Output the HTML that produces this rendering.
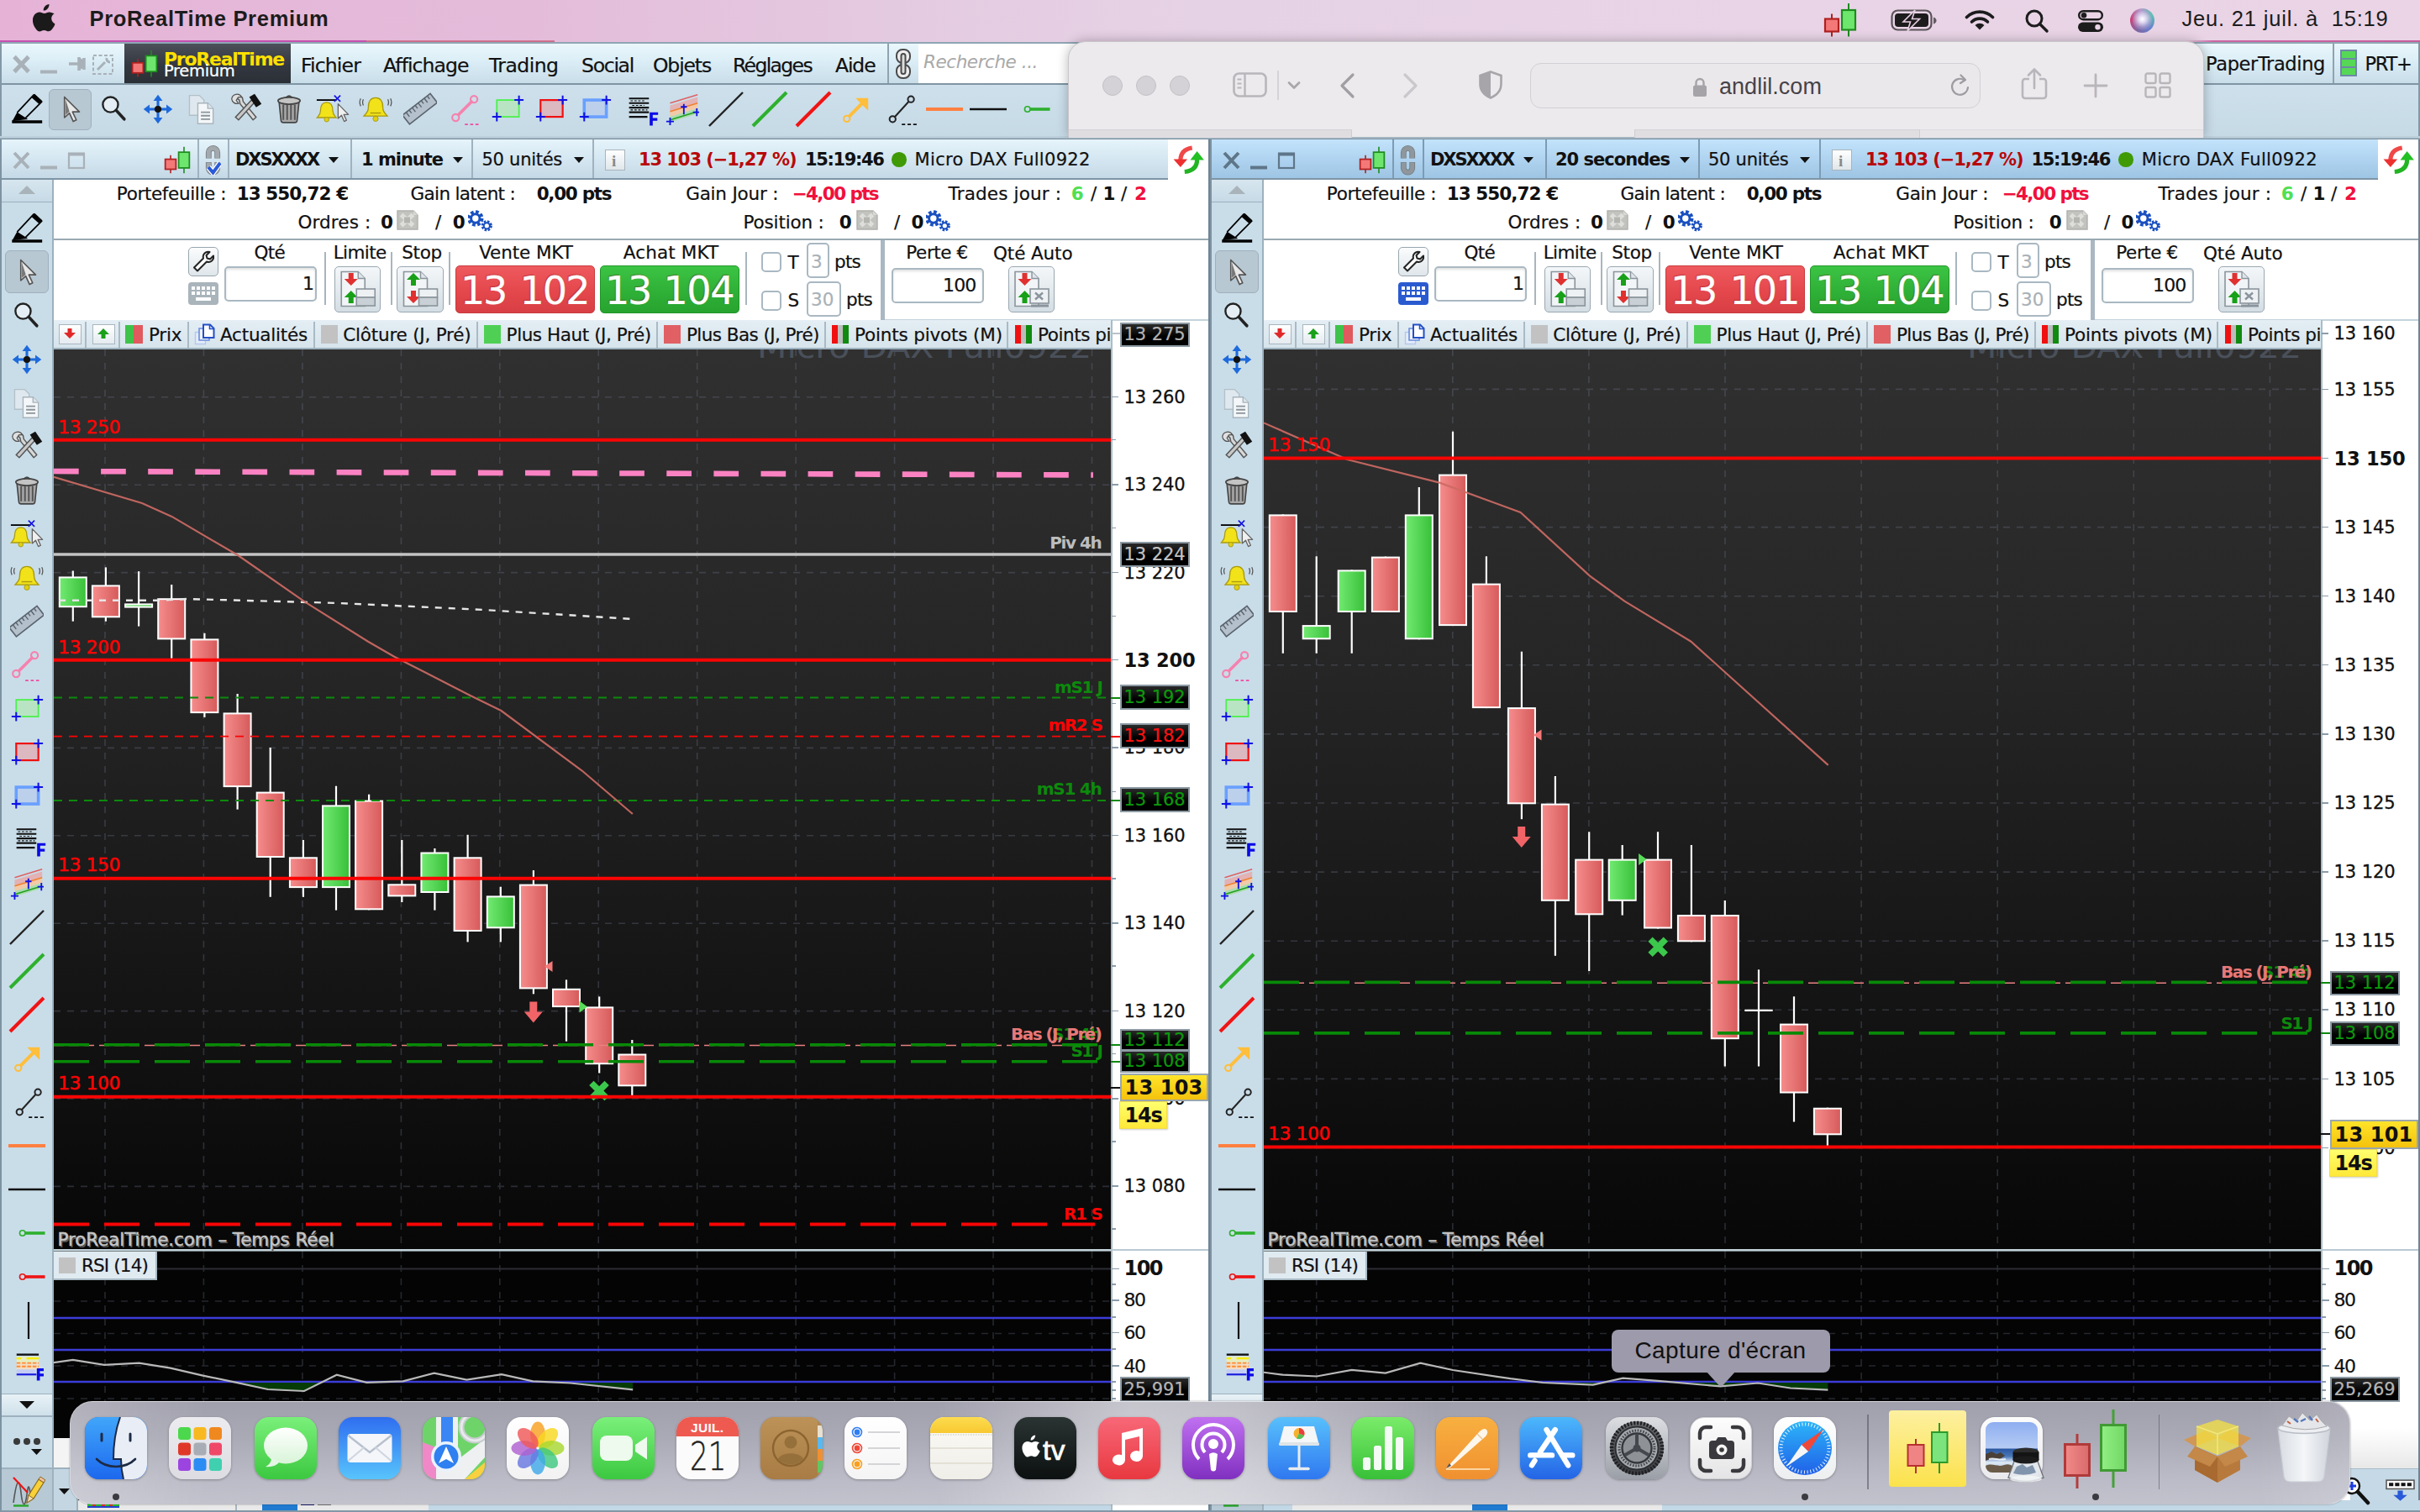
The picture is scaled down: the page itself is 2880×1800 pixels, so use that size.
<!DOCTYPE html>
<html lang="fr"><head><meta charset="utf-8"><title>ProRealTime Premium</title>
<style>
html,body{margin:0;padding:0;background:#fff;}
body{width:2880px;height:1800px;position:relative;overflow:hidden;font-family:"DejaVu Sans","Liberation Sans",sans-serif;}
div,span.t,svg{position:absolute;box-sizing:border-box;}
span.t{white-space:pre;line-height:1;}

</style></head><body>
<svg width="0" height="0" style="left:0;top:0"><defs><symbol id="i-pencil" viewBox="0 0 44 44"><path d="M2.500 38.600H42" stroke="#000" stroke-width="3.800"/><path d="M3 37.500L9.200 26l14.200 9.200z" fill="#000"/><path d="M9.200 26.500L31 3.100l10.500 9.200L20.100 33.700" fill="none" stroke="#000" stroke-width="1.900" stroke-linejoin="round"/><path d="M27.700 6.200l4.400-4.400 10 9.400-3.900 4.400z" fill="#000"/></symbol><symbol id="i-arrow" viewBox="0 0 44 44"><path d="M14 6v27l6.500-6 5 11 4-2-5-10.500h9z" fill="#e8e8e8" stroke="#555" stroke-width="1.800" stroke-linejoin="round"/><path d="M15.500 9.500v20l5-4.500z" fill="#777"/></symbol><symbol id="i-mag" viewBox="0 0 44 44"><circle cx="17" cy="16" r="10" fill="#e4eef4" stroke="#222" stroke-width="2.600"/><path d="M24.500 23.500L35 35" stroke="#222" stroke-width="4" stroke-linecap="round"/></symbol><symbol id="i-move" viewBox="0 0 44 44"><g fill="#1e6adc"><path d="M22 3l6 8h-12z"/><path d="M22 41l6-8h-12z"/><path d="M3 22l8-6v12z"/><path d="M41 22l-8-6v12z"/><rect x="20.300" y="9" width="3.400" height="26"/><rect x="9" y="20.300" width="26" height="3.400"/></g><circle cx="22" cy="22" r="4.500" fill="#111"/></symbol><symbol id="i-copy" viewBox="0 0 44 44"><path d="M6 4h13l6 6v20H6z" fill="#dfe8ee" stroke="#b4c0c8" stroke-width="1.500"/><path d="M17 14h13l7 7v20H17z" fill="#f4f7f9" stroke="#a8b4bc" stroke-width="1.500"/><path d="M30 14v7h7" fill="#dde5ea" stroke="#a8b4bc" stroke-width="1.500"/><path d="M21 26h12M21 30.500h12M21 35h12" stroke="#8a949c" stroke-width="2"/></symbol><symbol id="i-tools" viewBox="0 0 44 44"><path d="M8 6l5 4 1 5 17 21 4-3.500L18 12l-1-5-5-4z" fill="#d8d8d8" stroke="#555" stroke-width="1.600" stroke-linejoin="round"/><path d="M33 13L12 36l-4-3.500L29 10z" fill="#c8c8c8" stroke="#555" stroke-width="1.600"/><path d="M26 6l7-4 9 13-7 4.500z" fill="#111"/><path d="M3 8.500a7 7 0 0 0 9 6l-3-4 2.500-4 4.500-.5A7 7 0 0 0 3 8.500z" fill="#e0e0e0" stroke="#555" stroke-width="1.400"/></symbol><symbol id="i-trash" viewBox="0 0 44 44"><path d="M9 13h26l-2.500 24a3 3 0 0 1-3 2.500h-15a3 3 0 0 1-3-2.500z" fill="#a8a8a8" stroke="#444" stroke-width="1.800"/><path d="M14.500 16v20M19.500 16v20M24.500 16v20M29.500 16v20" stroke="#555" stroke-width="2.200"/><ellipse cx="22" cy="11" rx="14.500" ry="4.500" fill="#c4c4c4" stroke="#444" stroke-width="1.800"/><path d="M18 7q4-5 8 0" fill="none" stroke="#444" stroke-width="2"/></symbol><symbol id="i-bellc" viewBox="0 0 44 44"><path d="M1 10h26" stroke="#000" stroke-width="2"/><path d="M14 13c-6 0-8 5-8 11 0 5-3 7-4.500 9h25c-1.500-2-4.500-4-4.500-9 0-6-2-11-8-11z" fill="#f2e21a" stroke="#a89a10" stroke-width="1.400"/><circle cx="14" cy="35.500" r="3" fill="#e0d010" stroke="#a89a10"/><path d="M24 4l8 8M32 4l-8 8" stroke="#1414e0" stroke-width="1.800"/><path d="M29 15v19l4.500-4 3.500 8 3-1.500-3.500-7.500h6z" fill="#f0f0f0" stroke="#666" stroke-width="1.500" stroke-linejoin="round"/></symbol><symbol id="i-bell" viewBox="0 0 44 44"><path d="M22 7c-7 0-9.500 6-9.500 13 0 6-4 8.500-6 11h31c-2-2.500-6-5-6-11 0-7-2.500-13-9.500-13z" fill="#f2e21a" stroke="#a89a10" stroke-width="1.500"/><path d="M15 27h14" stroke="#a89a10" stroke-width="1.500"/><circle cx="22" cy="34.500" r="3.400" fill="#e0d010" stroke="#a89a10"/><path d="M6 9q-2 4 0 8M2.500 8q-2.500 5 0 10M38 9q2 4 0 8M41.500 8q2.500 5 0 10" fill="none" stroke="#555" stroke-width="1.400"/></symbol><symbol id="i-ruler" viewBox="0 0 44 44"><g transform="rotate(-38 22 22)"><rect x="-1" y="14" width="46" height="15" fill="#b4c0cc" stroke="#5a646e" stroke-width="1.800"/><path d="M5 14v7M10 14v5M15 14v7M20 14v5M25 14v7M30 14v5M35 14v7M40 14v5" stroke="#5a646e" stroke-width="1.500"/></g></symbol><symbol id="i-pink" viewBox="0 0 44 44"><path d="M11 30L30 11" stroke="#f582ae" stroke-width="4"/><circle cx="8" cy="33" r="4.500" fill="none" stroke="#f582ae" stroke-width="2.400"/><circle cx="32" cy="9" r="4.500" fill="none" stroke="#f582ae" stroke-width="2.400"/><path d="M20 42h18" stroke="#f04aa0" stroke-width="1.800" stroke-dasharray="4 3"/></symbol><symbol id="i-rectg" viewBox="0 0 44 44"><rect x="8" y="10" width="29" height="22" fill="#b8e4c4" stroke="#4ef04e" stroke-width="2"/><g stroke="#1010e6" stroke-width="2.200"><path d="M2 32h12M8 26v12M31 10h12M37 4v12"/></g></symbol><symbol id="i-rectr" viewBox="0 0 44 44"><rect x="8" y="10" width="29" height="22" fill="#dcb8c0" stroke="#f01010" stroke-width="2.400"/><g stroke="#1010e6" stroke-width="2.200"><path d="M2 32h12M8 26v12M31 10h12M37 4v12"/></g></symbol><symbol id="i-rectb" viewBox="0 0 44 44"><rect x="8" y="10" width="29" height="22" fill="#bcd0ec" stroke="#6aa0ff" stroke-width="4"/><g stroke="#1010e6" stroke-width="2.200"><path d="M2 32h12M8 26v12M31 10h12M37 4v12"/></g></symbol><symbol id="i-textf" viewBox="0 0 44 44"><path d="M4 8h26M4 14h26M4 20h26M4 26h26M4 32h24" stroke="#111" stroke-width="2.400"/><path d="M6 11h20M8 17h16M6 23h22" stroke="#111" stroke-width="1.200" stroke-dasharray="3 2"/><path d="M31 26h11v3.500h-7v4h6v3.500h-6v6.500h-4z" fill="#0a0ae6"/></symbol><symbol id="i-chan" viewBox="0 0 44 44"><path d="M6 17L42 6v8L6 25z" fill="#e8a8a8" opacity=".8"/><path d="M6 25l36-11v7L6 32z" fill="#f6c8a0" opacity=".9"/><path d="M6 32l36-11v7L6 39z" fill="#a8dca8" opacity=".9"/><path d="M6 25l36-11" stroke="#f08030" stroke-width="1.800"/><path d="M6 36l36-11" stroke="#20a020" stroke-width="1.800"/><path d="M6 14L42 3" stroke="#e06060" stroke-width="1.500"/><g stroke="#1010e6" stroke-width="2"><path d="M1 38h10M6 33v10M36 26h10M41 21v10M20 19h8M24 15v14"/></g></symbol><symbol id="i-lineb" viewBox="0 0 44 44"><path d="M2 42L42 2" stroke="#222" stroke-width="2.400"/></symbol><symbol id="i-lineg" viewBox="0 0 44 44"><path d="M2 42L42 2" stroke="#2eb02e" stroke-width="4"/></symbol><symbol id="i-liner" viewBox="0 0 44 44"><path d="M2 42L42 2" stroke="#f01414" stroke-width="4"/></symbol><symbol id="i-oarrow" viewBox="0 0 44 44"><path d="M11 32L30 13" stroke="#ffbe3c" stroke-width="4.500"/><path d="M20 7.500h16.500V24z" fill="#ffbe3c"/><circle cx="8.500" cy="34.500" r="4" fill="none" stroke="#ffbe3c" stroke-width="2.400"/></symbol><symbol id="i-node" viewBox="0 0 44 44"><path d="M10 33L30 11" stroke="#222" stroke-width="2.200"/><circle cx="8" cy="35" r="4" fill="#c8dce8" stroke="#222" stroke-width="2.200"/><circle cx="32" cy="9" r="4" fill="#c8dce8" stroke="#222" stroke-width="2.200"/><path d="M20 42h20" stroke="#111" stroke-width="2" stroke-dasharray="4.500 3"/></symbol><symbol id="i-hlo" viewBox="0 0 44 44"><path d="M0 22h44" stroke="#ff8040" stroke-width="4"/></symbol><symbol id="i-hlb" viewBox="0 0 44 44"><path d="M0 22h44" stroke="#111" stroke-width="2.400"/></symbol><symbol id="i-rayg" viewBox="0 0 44 44"><path d="M12 22h26" stroke="#2eb02e" stroke-width="4"/><circle cx="8.500" cy="22" r="3.600" fill="none" stroke="#2eb02e" stroke-width="1.800"/></symbol><symbol id="i-rayr" viewBox="0 0 44 44"><path d="M12 22h26" stroke="#f01414" stroke-width="4"/><circle cx="8.500" cy="22" r="3.600" fill="none" stroke="#f01414" stroke-width="1.800"/></symbol><symbol id="i-vline" viewBox="0 0 44 44"><path d="M24 0v44" stroke="#111" stroke-width="2.200"/></symbol><symbol id="i-fib" viewBox="0 0 44 44"><path d="M8.500 9.500h29" stroke="#111" stroke-width="2.600"/><rect x="8.500" y="12" width="29" height="8" fill="#e8ecc0"/><path d="M8.500 14.500h29" stroke="#f4ec00" stroke-width="2.400" stroke-dasharray="6 7 16 0"/><rect x="8.500" y="20" width="29" height="9" fill="#f4dcc0"/><path d="M8.500 20.500h29M8.500 25h29" stroke="#ff8a30" stroke-width="2" stroke-dasharray="5 2"/><rect x="8.500" y="29" width="24" height="5" fill="#c4ccf4"/><path d="M8.500 35.500h26" stroke="#1a1ae0" stroke-width="2.400"/><path d="M35 27.500h11.500V31h-7.500v3.500h6.500V38h-6.500v5.500h-4z" fill="#0a0ae6"/></symbol></defs></svg>
<div style="left:0px;top:0px;width:2880px;height:1800px;background:#c9dde9;"></div>
<div style="left:0px;top:0px;width:2880px;height:50px;background:linear-gradient(90deg,#e6b3d7 0%,#e4bcda 22%,#e4cbe1 38%,#e6d2e5 50%,#e8d4e6 75%,#ead4e6 100%);"></div>
<div style="left:0px;top:48px;width:436px;height:2px;background:#c650b0;"></div>
<div style="left:436px;top:48px;width:224px;height:2px;background:linear-gradient(#d47c98,#cc6684);"></div>
<div style="left:2600px;top:48px;width:280px;height:2px;background:linear-gradient(90deg,rgba(204,98,160,0),#cc66a4 12%,#c85c9c);"></div>
<svg style="left:39px;top:5px" width="28" height="33" viewBox="0 0 28 33"><path d="M19.500 0c.2 2-.6 3.900-1.800 5.300-1.200 1.400-3.100 2.500-5 2.300-.3-1.900.7-3.900 1.800-5.100C15.700 1.100 17.800.1 19.500 0zM25.600 11.300c-2.100 1.300-3.400 3.300-3.400 5.800 0 2.900 1.800 5.300 4.300 6.300-.5 1.600-1.300 3.200-2.300 4.700-1.400 2.100-2.900 4.200-5.200 4.200-2.300 0-2.900-1.400-5.500-1.400-2.600 0-3.400 1.400-5.500 1.500-2.200.1-3.900-2.300-5.300-4.400C-.2 23.700-1.300 16.900 1.700 12.900c1.500-2.100 3.900-3.400 6.300-3.400 2.400 0 3.900 1.500 5.900 1.500 1.900 0 3.100-1.500 5.900-1.500 2.100 0 4.400 1.100 5.800 1.800z" fill="#1a1a1a"/></svg>
<span class="t" style="left:106.5px;top:10.4px;font-size:25.5px;color:#1c1c1c;font-family:'Liberation Sans','DejaVu Sans',sans-serif;font-weight:700;letter-spacing:0.70px;">ProRealTime Premium</span>
<svg style="left:2170px;top:3px" width="40" height="42" viewBox="0 0 40 42"><path d="M10 13.500V40.500" stroke="#b02020" stroke-width="2"/><rect x="2" y="19.500" width="16" height="15" fill="#f47878" stroke="#b02020" stroke-width="2.200"/><path d="M30 1V40.500" stroke="#1e8c1e" stroke-width="2"/><rect x="22" y="9" width="16" height="23.500" fill="#6ee66e" stroke="#1e8c1e" stroke-width="2.200"/></svg>
<svg style="left:2250px;top:11px" width="56" height="27" viewBox="0 0 56 27"><rect x="1.500" y="1.500" width="47" height="23" rx="7" fill="none" stroke="#2a2a2a" stroke-width="2.200" opacity=".75"/><rect x="5" y="5" width="40" height="16" rx="4" fill="#1c1c1c"/><path d="M51 9.500v8c2-.5 3.500-2 3.500-4s-1.500-3.500-3.500-4z" fill="#2a2a2a" opacity=".7"/><path d="M29 1L15 15h8.500l-3.500 11 14.500-14.500h-9z" fill="#1c1c1c" stroke="#e8d0e4" stroke-width="1.600"/></svg>
<svg style="left:2338px;top:11px" width="36" height="26" viewBox="0 0 36 26"><g fill="none" stroke="#1c1c1c" stroke-width="3.600" stroke-linecap="round"><path d="M2.500 9.500a22 22 0 0 1 31 0"/><path d="M8.500 15a13.500 13.500 0 0 1 19 0"/></g><path d="M18 24.500l-5.500-5.500a7.800 7.800 0 0 1 11 0z" fill="#1c1c1c"/></svg>
<svg style="left:2409px;top:10px" width="30" height="30" viewBox="0 0 30 30"><circle cx="12" cy="12" r="9" fill="none" stroke="#1c1c1c" stroke-width="3"/><path d="M18.500 18.500L27 27" stroke="#1c1c1c" stroke-width="3.400" stroke-linecap="round"/></svg>
<svg style="left:2473px;top:12px" width="30" height="26" viewBox="0 0 30 26"><rect x="1.200" y="1.200" width="27.600" height="10" rx="5" fill="none" stroke="#1c1c1c" stroke-width="2.400"/><circle cx="7" cy="6.200" r="3.300" fill="#1c1c1c"/><rect x="0" y="14.500" width="30" height="11.500" rx="5.750" fill="#1c1c1c"/><circle cx="23.500" cy="20.200" r="3.200" fill="#ead3e5"/></svg>
<div style="left:2535px;top:10px;width:29px;height:29px;border-radius:50%;background:conic-gradient(from 200deg,#7a6aa8,#c8447a 22%,#b49ccc 42%,#5cc0b4 62%,#6a80cc 82%,#7a6aa8);"></div>
<div style="left:2538px;top:13px;width:23px;height:23px;border-radius:50%;background:radial-gradient(circle at 50% 42%,#fff 0%,#e4dcf4 22%,rgba(190,170,215,.55) 55%,rgba(150,130,180,0) 78%);"></div>
<span class="t" style="left:2596.5px;top:10.4px;font-size:25.5px;color:#1c1c1c;font-family:'Liberation Sans','DejaVu Sans',sans-serif;letter-spacing:0.81px;">Jeu. 21 juil. à  15:19</span>
<div style="left:0px;top:50px;width:2880px;height:114px;background:#c8dce8;"></div>
<div style="left:0px;top:50px;width:2880px;height:2px;background:#8fa6b4;"></div>
<div style="left:2px;top:52px;width:2876px;height:47px;background:linear-gradient(#eaf7fc,#d9ecf5 50%,#c9dde9);"></div>
<div style="left:0px;top:99px;width:2880px;height:2px;background:#7f95a3;"></div>
<div style="left:0px;top:50px;width:2px;height:114px;background:#8398a6;"></div>
<div style="left:2878px;top:50px;width:2px;height:114px;background:#8398a6;"></div>
<div style="left:2px;top:101px;width:2876px;height:61px;background:linear-gradient(#cde0ec,#c6dae6);"></div>
<div style="left:0px;top:162px;width:2880px;height:2px;background:#bccfdb;"></div>
<svg style="left:14px;top:64px" width="124" height="26" viewBox="0 0 124 26"><g stroke="#a9b1b8" fill="none"><path d="M3 3.500l17 18M20 3.500l-17 18" stroke-width="5"/><path d="M34 21.500h20" stroke-width="4"/><path d="M68 12h18M80 4v16M86 5v14" stroke-width="3.500"/><path d="M80 5l6 3v8l-6 3z" fill="#a9b1b8"/><rect x="97" y="2" width="23" height="22" stroke-width="2" stroke-dasharray="4 2.500"/><path d="M102 19l9-9m2-5a4 4 0 0 0 4 5" stroke-width="3"/></g></svg>
<div style="left:148px;top:52px;width:198px;height:47px;background:linear-gradient(#4b5059,#33373f 55%,#2b2f36);"></div>
<svg style="left:156px;top:58px" width="32" height="36" viewBox="0 0 40 42"><path d="M10 13.500V40.500" stroke="#b02020" stroke-width="2"/><rect x="2" y="19.500" width="16" height="15" fill="#f47878" stroke="#b02020" stroke-width="2.200"/><path d="M30 1V40.500" stroke="#1e8c1e" stroke-width="2"/><rect x="22" y="9" width="16" height="23.500" fill="#6ee66e" stroke="#1e8c1e" stroke-width="2.200"/></svg>
<span class="t" style="left:195.0px;top:59.9px;font-size:22px;color:#ffe000;font-family:'DejaVu Sans','Liberation Sans',sans-serif;font-weight:700;letter-spacing:-1.25px;">ProRealTime</span>
<span class="t" style="left:195.0px;top:75.2px;font-size:19.5px;color:#ffffff;font-family:'DejaVu Sans','Liberation Sans',sans-serif;letter-spacing:-0.33px;-webkit-text-stroke-width:.22px;">Premium</span>
<span class="t" style="left:358.0px;top:67.4px;font-size:23.5px;color:#111;font-family:'DejaVu Sans','Liberation Sans',sans-serif;letter-spacing:-0.83px;-webkit-text-stroke-width:.22px;">Fichier</span>
<span class="t" style="left:456.0px;top:67.4px;font-size:23.5px;color:#111;font-family:'DejaVu Sans','Liberation Sans',sans-serif;letter-spacing:-0.93px;-webkit-text-stroke-width:.22px;">Affichage</span>
<span class="t" style="left:582.0px;top:67.4px;font-size:23.5px;color:#111;font-family:'DejaVu Sans','Liberation Sans',sans-serif;letter-spacing:-0.53px;-webkit-text-stroke-width:.22px;">Trading</span>
<span class="t" style="left:692.0px;top:67.4px;font-size:23.5px;color:#111;font-family:'DejaVu Sans','Liberation Sans',sans-serif;letter-spacing:-1.28px;-webkit-text-stroke-width:.22px;">Social</span>
<span class="t" style="left:777.0px;top:67.4px;font-size:23.5px;color:#111;font-family:'DejaVu Sans','Liberation Sans',sans-serif;letter-spacing:-1.14px;-webkit-text-stroke-width:.22px;">Objets</span>
<span class="t" style="left:872.0px;top:67.4px;font-size:23.5px;color:#111;font-family:'DejaVu Sans','Liberation Sans',sans-serif;letter-spacing:-1.65px;-webkit-text-stroke-width:.22px;">Réglages</span>
<span class="t" style="left:994.0px;top:67.4px;font-size:23.5px;color:#111;font-family:'DejaVu Sans','Liberation Sans',sans-serif;letter-spacing:-1.12px;-webkit-text-stroke-width:.22px;">Aide</span>
<div style="left:1056px;top:52px;width:2px;height:47px;background:#8fa3b0;"></div>
<svg style="left:1064px;top:57px" width="22" height="38" viewBox="0 0 22 38"><g fill="none" stroke="#4a4a4a" stroke-width="2"><rect x="3" y="2" width="16" height="16" rx="7" fill="#eee"/><rect x="3" y="20" width="16" height="16" rx="7" fill="#eee"/><rect x="8.500" y="7" width="5" height="24" rx="2.500" fill="#ddd"/></g></svg>
<div style="left:1093px;top:52px;width:400px;height:47px;background:#fff;"></div>
<span class="t" style="left:1099.0px;top:63.3px;font-size:21.5px;color:#a9a9a9;font-family:'DejaVu Sans','Liberation Sans',sans-serif;font-style:italic;letter-spacing:-0.44px;">Recherche ...</span>
<span class="t" style="left:2625.0px;top:64.5px;font-size:22.5px;color:#111;font-family:'DejaVu Sans','Liberation Sans',sans-serif;letter-spacing:-0.36px;-webkit-text-stroke-width:.22px;">PaperTrading</span>
<div style="left:2776px;top:52px;width:2px;height:47px;background:#8fa3b0;"></div>
<div style="left:2785px;top:59px;width:20px;height:32px;background:#56d856;border:2px solid #6f88a8;"></div>
<div style="left:2785px;top:69px;width:20px;height:2px;background:#6f88a8;"></div>
<div style="left:2785px;top:79px;width:20px;height:2px;background:#6f88a8;"></div>
<span class="t" style="left:2814.5px;top:64.5px;font-size:22.5px;color:#111;font-family:'DejaVu Sans','Liberation Sans',sans-serif;letter-spacing:-1.29px;-webkit-text-stroke-width:.22px;">PRT+</span>
<div style="left:58px;top:106px;width:51px;height:49px;background:#b7c8d3;border:1.500px solid #9fb0bc;border-radius:6px;"></div>
<svg style="left:12px;top:110px;overflow:visible" width="40" height="40"><use href="#i-pencil"/></svg>
<svg style="left:64px;top:110px;overflow:visible" width="40" height="40"><use href="#i-arrow"/></svg>
<svg style="left:115.8px;top:110px;overflow:visible" width="40" height="40"><use href="#i-mag"/></svg>
<svg style="left:167.8px;top:110px;overflow:visible" width="40" height="40"><use href="#i-move"/></svg>
<svg style="left:220px;top:110px;overflow:visible" width="40" height="40"><use href="#i-copy"/></svg>
<svg style="left:272.8px;top:110px;overflow:visible" width="40" height="40"><use href="#i-tools"/></svg>
<svg style="left:324px;top:110px;overflow:visible" width="40" height="40"><use href="#i-trash"/></svg>
<svg style="left:375.5px;top:110px;overflow:visible" width="40" height="40"><use href="#i-bellc"/></svg>
<svg style="left:427px;top:110px;overflow:visible" width="40" height="40"><use href="#i-bell"/></svg>
<svg style="left:480px;top:110px;overflow:visible" width="40" height="40"><use href="#i-ruler"/></svg>
<svg style="left:535px;top:110px;overflow:visible" width="40" height="40"><use href="#i-pink"/></svg>
<svg style="left:584px;top:110px;overflow:visible" width="40" height="40"><use href="#i-rectg"/></svg>
<svg style="left:636px;top:110px;overflow:visible" width="40" height="40"><use href="#i-rectr"/></svg>
<svg style="left:688px;top:110px;overflow:visible" width="40" height="40"><use href="#i-rectb"/></svg>
<svg style="left:745px;top:110px;overflow:visible" width="40" height="40"><use href="#i-textf"/></svg>
<svg style="left:792px;top:110px;overflow:visible" width="40" height="40"><use href="#i-chan"/></svg>
<svg style="left:842px;top:108px;overflow:visible" width="44" height="44"><use href="#i-lineb"/></svg>
<svg style="left:894px;top:108px;overflow:visible" width="44" height="44"><use href="#i-lineg"/></svg>
<svg style="left:946px;top:108px;overflow:visible" width="44" height="44"><use href="#i-liner"/></svg>
<svg style="left:1000px;top:110px;overflow:visible" width="40" height="40"><use href="#i-oarrow"/></svg>
<svg style="left:1055px;top:110px;overflow:visible" width="40" height="40"><use href="#i-node"/></svg>
<svg style="left:1102px;top:108px;overflow:visible" width="44" height="44"><use href="#i-hlo"/></svg>
<svg style="left:1154px;top:108px;overflow:visible" width="44" height="44"><use href="#i-hlb"/></svg>
<svg style="left:1215px;top:110px;overflow:visible" width="40" height="40"><use href="#i-rayg"/></svg>
<div style="left:1271px;top:49px;width:1352px;height:114px;background:#eceaed;border-radius:21px 21px 0 0;border:1px solid #c9c6cb;border-bottom:0;box-shadow:0 0 14px rgba(0,0,0,.28);"></div>
<div style="left:1272px;top:154px;width:337px;height:9.5px;background:#e0dde1;border-top:1px solid #d6d3d8;border-right:1px solid #d0cdd2;"></div>
<div style="left:1944.5px;top:154px;width:340.5px;height:9.5px;background:#e1dee2;border-top:1px solid #d6d3d8;border-left:1px solid #d0cdd2;border-right:1px solid #d0cdd2;"></div>
<div style="left:2285px;top:154px;width:337px;height:9.5px;background:#e8e5e9;border-top:1px solid #dedbe0;"></div>
<div style="left:1312px;top:90px;width:24px;height:24px;border-radius:50%;background:#d5d2d7;border:1px solid #c4c1c6;"></div>
<div style="left:1351.7px;top:90px;width:24px;height:24px;border-radius:50%;background:#d5d2d7;border:1px solid #c4c1c6;"></div>
<div style="left:1392px;top:90px;width:24px;height:24px;border-radius:50%;background:#d5d2d7;border:1px solid #c4c1c6;"></div>
<svg style="left:1467px;top:86px" width="42" height="30" viewBox="0 0 42 30"><rect x="1.500" y="1.500" width="38" height="27" rx="6" fill="none" stroke="#b9b6bb" stroke-width="2.600"/><path d="M14.500 2v26" stroke="#b9b6bb" stroke-width="2.400"/><path d="M5.500 8.500h5M5.500 13.500h5M5.500 18.500h5" stroke="#b9b6bb" stroke-width="2"/></svg>
<div style="left:1520px;top:84px;width:1.5px;height:35px;background:#d6d3d8;"></div>
<svg style="left:1532px;top:96px" width="16" height="11" viewBox="0 0 16 11"><path d="M2 2.500l6 6 6-6" fill="none" stroke="#aaa7ac" stroke-width="2.800" stroke-linecap="round" stroke-linejoin="round"/></svg>
<svg style="left:1592px;top:86px" width="22" height="32" viewBox="0 0 22 32"><path d="M18 3L5 16l13 13" fill="none" stroke="#a29fa4" stroke-width="3.200" stroke-linecap="round" stroke-linejoin="round"/></svg>
<svg style="left:1668px;top:86px" width="22" height="32" viewBox="0 0 22 32"><path d="M4 3l13 13L4 29" fill="none" stroke="#cbc8cd" stroke-width="3.200" stroke-linecap="round" stroke-linejoin="round"/></svg>
<svg style="left:1759px;top:84px" width="30" height="34" viewBox="0 0 30 34"><path d="M15 1.500l12.500 4.500v10c0 8-5.500 13.500-12.500 16.500C8 29.500 2.500 24 2.500 16V6z" fill="none" stroke="#a8a5aa" stroke-width="2.600"/><path d="M15 1.500v31C8 29.500 2.500 24 2.500 16V6z" fill="#a8a5aa"/></svg>
<div style="left:1821px;top:75px;width:536px;height:54px;background:#ebe8ec;border:1.500px solid #d3d0d5;border-radius:13px;"></div>
<svg style="left:2014px;top:91px" width="18" height="25" viewBox="0 0 18 25"><rect x="1" y="10.500" width="16" height="13.500" rx="2.500" fill="#a6a3a8"/><path d="M4.500 11V7.500a4.500 4.500 0 0 1 9 0V11" fill="none" stroke="#a6a3a8" stroke-width="2.400"/></svg>
<span class="t" style="left:2046.0px;top:90.2px;font-size:27px;color:#454347;font-family:'Liberation Sans','DejaVu Sans',sans-serif;letter-spacing:0.04px;">andlil.com</span>
<svg style="left:2320px;top:88px" width="26" height="28" viewBox="0 0 26 28"><path d="M22 16a9.500 9.500 0 1 1-4-8.500" fill="none" stroke="#9f9ca1" stroke-width="2.200" stroke-linecap="round"/><path d="M13.500 1.500l5.500 5.500-6 4" fill="none" stroke="#9f9ca1" stroke-width="2.200" stroke-linecap="round" stroke-linejoin="round"/></svg>
<svg style="left:2404px;top:80px" width="34" height="40" viewBox="0 0 34 40"><path d="M11 14H6a3 3 0 0 0-3 3v17a3 3 0 0 0 3 3h22a3 3 0 0 0 3-3V17a3 3 0 0 0-3-3h-5" fill="none" stroke="#b9b6bb" stroke-width="2.600"/><path d="M17 25V3M10 9.500L17 2.500l7 7" fill="none" stroke="#b9b6bb" stroke-width="2.600" stroke-linecap="round" stroke-linejoin="round"/></svg>
<svg style="left:2479px;top:87px" width="30" height="30" viewBox="0 0 30 30"><path d="M15 2v26M2 15h26" stroke="#b9b6bb" stroke-width="2.800" stroke-linecap="round"/></svg>
<svg style="left:2552px;top:86px" width="32" height="31" viewBox="0 0 32 31"><g fill="none" stroke="#b9b6bb" stroke-width="2.400"><rect x="1.500" y="1.500" width="12" height="11.500" rx="2"/><rect x="18.500" y="1.500" width="12" height="11.500" rx="2"/><rect x="1.500" y="18" width="12" height="11.500" rx="2"/><rect x="18.500" y="18" width="12" height="11.500" rx="2"/></g></svg>
<div style="left:0px;top:166px;width:1440px;height:1634px;background:#fff;"></div>
<div style="left:0px;top:164px;width:2px;height:1636px;background:#7e93a1;"></div>
<div style="left:1438px;top:164px;width:2.5px;height:1636px;background:#6f8493;"></div>
<div style="left:2px;top:166px;width:1388px;height:47px;background:linear-gradient(#e6f4fb,#d6e8f2 45%,#c4d8e5);"></div>
<div style="left:0px;top:164px;width:1440px;height:1px;background:#a3b7c4;"></div>
<div style="left:0px;top:165px;width:1440px;height:1px;background:#7e93a1;"></div>
<div style="left:2px;top:212px;width:1388px;height:2px;background:#7e95a5;"></div>
<div style="left:1390px;top:166px;width:48px;height:48px;background:#fff;"></div>
<svg style="left:14px;top:179px" width="90" height="24" viewBox="0 0 90 24"><g stroke="#a9b1b8" fill="none"><path d="M3 3l17 18M20 3L3 21" stroke-width="4"/><path d="M34 20.500h20" stroke-width="4"/><rect x="68" y="4" width="18" height="17" stroke-width="2.200"/><path d="M67 4.500h20" stroke-width="4"/></g></svg>
<svg style="left:195px;top:173.5px" width="32" height="33.5" viewBox="0 0 40 42"><path d="M10 13.500V40.500" stroke="#b02020" stroke-width="2"/><rect x="2" y="19.500" width="16" height="15" fill="#f47878" stroke="#b02020" stroke-width="2.200"/><path d="M30 1V40.500" stroke="#1e8c1e" stroke-width="2"/><rect x="22" y="9" width="16" height="23.500" fill="#6ee66e" stroke="#1e8c1e" stroke-width="2.200"/></svg>
<div style="left:235px;top:166px;width:2px;height:46px;background:#9fb2bf;"></div>
<div style="left:271px;top:166px;width:2px;height:46px;background:#9fb2bf;"></div>
<div style="left:417px;top:166px;width:2px;height:46px;background:#9fb2bf;"></div>
<div style="left:561px;top:166px;width:2px;height:46px;background:#9fb2bf;"></div>
<div style="left:705px;top:166px;width:2px;height:46px;background:#9fb2bf;"></div>
<svg style="left:243.5px;top:171.500px" width="19" height="37" viewBox="0 0 19 37"><g fill="none" stroke="#737b81" stroke-width="6.800"><path d="M4.300 16.500V9.500a5.200 5.200 0 0 1 10.400 0V16.500"/><path d="M4.300 21v7a5.200 5.200 0 0 0 10.400 0V21"/></g><g fill="none" stroke="#a3a9ad" stroke-width="5.200"><path d="M4.300 16V9.500a5.200 5.200 0 0 1 10.400 0V16"/><path d="M4.300 21.500V28a5.200 5.200 0 0 0 10.400 0v-6.500"/></g><path d="M4 27l5.500 6.500L18 22" fill="none" stroke="#fff" stroke-width="6.500"/><path d="M4 27l5.500 6.500L18 22" fill="none" stroke="#2a5ad8" stroke-width="4"/></svg>
<span class="t" style="left:280.0px;top:179.7px;font-size:21px;color:#111;font-family:'DejaVu Sans','Liberation Sans',sans-serif;font-weight:700;letter-spacing:-2.07px;">DXSXXXX</span>
<svg style="left:391px;top:187px" width="12" height="7" viewBox="0 0 12 7"><path d="M0 0h12L6 7z" fill="#111"/></svg>
<span class="t" style="left:430.0px;top:179.7px;font-size:21px;color:#111;font-family:'DejaVu Sans','Liberation Sans',sans-serif;font-weight:700;letter-spacing:-1.02px;">1 minute</span>
<svg style="left:539px;top:187px" width="12" height="7" viewBox="0 0 12 7"><path d="M0 0h12L6 7z" fill="#111"/></svg>
<span class="t" style="left:573.5px;top:179.7px;font-size:21px;color:#111;font-family:'DejaVu Sans','Liberation Sans',sans-serif;letter-spacing:-0.27px;-webkit-text-stroke-width:.22px;">50 unités</span>
<svg style="left:683px;top:187px" width="12" height="7" viewBox="0 0 12 7"><path d="M0 0h12L6 7z" fill="#111"/></svg>
<div style="left:720px;top:178px;width:24px;height:25px;background:linear-gradient(#fff,#dfe6ea);border:1.500px solid #a9b4bb;"></div>
<span class="t" style="left:728.0px;top:181.9px;font-size:19px;color:#888;font-family:'Liberation Serif',serif;font-weight:700;">i</span>
<span class="t" style="left:760.0px;top:179.7px;font-size:21px;color:#b80808;font-family:'DejaVu Sans','Liberation Sans',sans-serif;font-weight:700;letter-spacing:-1.07px;">13 103 (−1,27 %)</span>
<span class="t" style="left:958.0px;top:179.7px;font-size:21px;color:#111;font-family:'DejaVu Sans','Liberation Sans',sans-serif;font-weight:700;letter-spacing:-1.37px;">15:19:46</span>
<div style="left:1061px;top:181px;width:17.5px;height:17.5px;border-radius:50%;background:#3f9a06;"></div>
<span class="t" style="left:1088.6px;top:179.7px;font-size:21px;color:#111;font-family:'DejaVu Sans','Liberation Sans',sans-serif;letter-spacing:0.29px;-webkit-text-stroke-width:.22px;">Micro DAX Full0922</span>
<svg style="left:1395px;top:172px" width="38" height="38" viewBox="0 0 38 38"><path d="M9.800 19Q10 6 23.700 4" fill="none" stroke="#f04848" stroke-width="5.200"/><path d="M1.500 17.500h16.600L9.800 27z" fill="#ee3030"/><path d="M29.600 18Q29.500 31 14.800 32.500" fill="none" stroke="#22b422" stroke-width="5.200"/><path d="M21.500 18.500h16.400L29.600 8z" fill="#22c022"/></svg>
<div style="left:2px;top:214px;width:61px;height:1586px;background:#c9dde9;"></div>
<div style="left:62px;top:214px;width:2px;height:1586px;background:#9db1be;"></div>
<div style="left:2px;top:214px;width:60px;height:27px;background:linear-gradient(#d7e6ef,#c6dae6);border-bottom:1.500px solid #9db1be;"></div>
<svg style="left:22px;top:221px" width="20" height="10" viewBox="0 0 20 10"><path d="M0 10L10 0l10 10z" fill="#a9b3ba"/></svg>
<div style="left:6px;top:298px;width:52px;height:51px;background:#b7c8d3;border:1.500px solid #9fb0bc;border-radius:6px;"></div>
<svg style="left:12px;top:252px;overflow:visible" width="40" height="40"><use href="#i-pencil"/></svg>
<svg style="left:12px;top:304px;overflow:visible" width="40" height="40"><use href="#i-arrow"/></svg>
<svg style="left:12px;top:356px;overflow:visible" width="40" height="40"><use href="#i-mag"/></svg>
<svg style="left:12px;top:408px;overflow:visible" width="40" height="40"><use href="#i-move"/></svg>
<svg style="left:12px;top:460px;overflow:visible" width="40" height="40"><use href="#i-copy"/></svg>
<svg style="left:12px;top:512px;overflow:visible" width="40" height="40"><use href="#i-tools"/></svg>
<svg style="left:12px;top:564px;overflow:visible" width="40" height="40"><use href="#i-trash"/></svg>
<svg style="left:12px;top:616px;overflow:visible" width="40" height="40"><use href="#i-bellc"/></svg>
<svg style="left:12px;top:668px;overflow:visible" width="40" height="40"><use href="#i-bell"/></svg>
<svg style="left:12px;top:720px;overflow:visible" width="40" height="40"><use href="#i-ruler"/></svg>
<svg style="left:12px;top:772px;overflow:visible" width="40" height="40"><use href="#i-pink"/></svg>
<svg style="left:12px;top:824px;overflow:visible" width="40" height="40"><use href="#i-rectg"/></svg>
<svg style="left:12px;top:876px;overflow:visible" width="40" height="40"><use href="#i-rectr"/></svg>
<svg style="left:12px;top:928px;overflow:visible" width="40" height="40"><use href="#i-rectb"/></svg>
<svg style="left:16px;top:980px;overflow:visible" width="40" height="40"><use href="#i-textf"/></svg>
<svg style="left:12px;top:1032px;overflow:visible" width="40" height="40"><use href="#i-chan"/></svg>
<svg style="left:10px;top:1082px;overflow:visible" width="44" height="44"><use href="#i-lineb"/></svg>
<svg style="left:10px;top:1134px;overflow:visible" width="44" height="44"><use href="#i-lineg"/></svg>
<svg style="left:10px;top:1186px;overflow:visible" width="44" height="44"><use href="#i-liner"/></svg>
<svg style="left:14px;top:1240px;overflow:visible" width="40" height="40"><use href="#i-oarrow"/></svg>
<svg style="left:16px;top:1292px;overflow:visible" width="40" height="40"><use href="#i-node"/></svg>
<svg style="left:10px;top:1342px;overflow:visible" width="44" height="44"><use href="#i-hlo"/></svg>
<svg style="left:10px;top:1394px;overflow:visible" width="44" height="44"><use href="#i-hlb"/></svg>
<svg style="left:19px;top:1448px;overflow:visible" width="40" height="40"><use href="#i-rayg"/></svg>
<svg style="left:19px;top:1500px;overflow:visible" width="40" height="40"><use href="#i-rayr"/></svg>
<svg style="left:10px;top:1550px;overflow:visible" width="44" height="44"><use href="#i-vline"/></svg>
<svg style="left:12px;top:1604px;overflow:visible" width="40" height="40"><use href="#i-fib"/></svg>
<div style="left:2px;top:1659px;width:60px;height:1px;background:#9db1be;"></div>
<div style="left:2px;top:1660px;width:60px;height:25px;background:linear-gradient(#e8f2f7,#cfe0ea);"></div>
<svg style="left:23px;top:1668px" width="18" height="9" viewBox="0 0 18 9"><path d="M0 0h18L9 9z" fill="#111"/></svg>
<div style="left:2px;top:1685px;width:60px;height:2px;background:#9db1be;"></div>
<div style="left:16px;top:1712px;width:7.5px;height:7.5px;background:#3a3a3a;border-radius:50%;"></div>
<div style="left:28px;top:1712px;width:7.5px;height:7.5px;background:#3a3a3a;border-radius:50%;"></div>
<div style="left:40px;top:1712px;width:7.5px;height:7.5px;background:#3a3a3a;border-radius:50%;"></div>
<svg style="left:37px;top:1725px" width="13" height="7" viewBox="0 0 13 7"><path d="M0 0h13L6.500 7z" fill="#111"/></svg>
<div style="left:2px;top:1747px;width:60px;height:2px;background:#9db1be;"></div>
<div style="left:2px;top:1749px;width:60px;height:49px;background:#b6c9d5;"></div>
<svg style="left:14px;top:1755px" width="40" height="40" viewBox="0 0 40 40"><path d="M2 34c4-30 7-30 9-12s5 18 7 2 3-8 5 4" fill="none" stroke="#555" stroke-width="1.600"/><path d="M2 4l17 18" stroke="#f01414" stroke-width="2.200"/><path d="M2 37.500h18" stroke="#28a428" stroke-width="2.400"/><path d="M18 34l2-9L32 6l6 4-12 19z" fill="#f8d038" stroke="#8a6a20" stroke-width="1.200"/><path d="M18 34l2-9 6 4z" fill="#f4dcb4" stroke="#8a6a20" stroke-width="1"/><path d="M32 6l2-3 6 4-2 3z" fill="#f0c0a0" stroke="#8a6a20" stroke-width="1"/></svg>
<span class="t" style="left:138.8px;top:219.8px;font-size:21.5px;color:#111;font-family:'DejaVu Sans','Liberation Sans',sans-serif;letter-spacing:-0.36px;-webkit-text-stroke-width:.22px;">Portefeuille :</span>
<span class="t" style="left:281.7px;top:219.8px;font-size:21.5px;color:#111;font-family:'DejaVu Sans','Liberation Sans',sans-serif;font-weight:700;letter-spacing:-0.94px;">13 550,72 €</span>
<span class="t" style="left:488.6px;top:219.8px;font-size:21.5px;color:#111;font-family:'DejaVu Sans','Liberation Sans',sans-serif;letter-spacing:-0.67px;-webkit-text-stroke-width:.22px;">Gain latent :</span>
<span class="t" style="left:638.7px;top:219.8px;font-size:21.5px;color:#111;font-family:'DejaVu Sans','Liberation Sans',sans-serif;font-weight:700;letter-spacing:-1.31px;">0,00 pts</span>
<span class="t" style="left:816.2px;top:219.8px;font-size:21.5px;color:#111;font-family:'DejaVu Sans','Liberation Sans',sans-serif;letter-spacing:-0.21px;-webkit-text-stroke-width:.22px;">Gain Jour :</span>
<span class="t" style="left:942.5px;top:219.8px;font-size:21.5px;color:#f0103c;font-family:'DejaVu Sans','Liberation Sans',sans-serif;font-weight:700;letter-spacing:-1.61px;">−4,00 pts</span>
<span class="t" style="left:1128.6px;top:219.8px;font-size:21.5px;color:#111;font-family:'DejaVu Sans','Liberation Sans',sans-serif;letter-spacing:0.15px;-webkit-text-stroke-width:.22px;">Trades jour :</span>
<span class="t" style="left:1274.7px;top:219.8px;font-size:21.5px;color:#50e050;font-family:'DejaVu Sans','Liberation Sans',sans-serif;font-weight:700;letter-spacing:-1.97px;">6</span>
<span class="t" style="left:1298.0px;top:219.8px;font-size:21.5px;color:#111;font-family:'DejaVu Sans','Liberation Sans',sans-serif;letter-spacing:-0.25px;-webkit-text-stroke-width:.22px;">/</span>
<span class="t" style="left:1312.5px;top:219.8px;font-size:21.5px;color:#111;font-family:'DejaVu Sans','Liberation Sans',sans-serif;font-weight:700;letter-spacing:-2.50px;">1</span>
<span class="t" style="left:1334.0px;top:219.8px;font-size:21.5px;color:#111;font-family:'DejaVu Sans','Liberation Sans',sans-serif;letter-spacing:-0.25px;-webkit-text-stroke-width:.22px;">/</span>
<span class="t" style="left:1350.0px;top:219.8px;font-size:21.5px;color:#f0103c;font-family:'DejaVu Sans','Liberation Sans',sans-serif;font-weight:700;letter-spacing:-1.97px;">2</span>
<span class="t" style="left:354.4px;top:253.8px;font-size:21.5px;color:#111;font-family:'DejaVu Sans','Liberation Sans',sans-serif;letter-spacing:0.14px;-webkit-text-stroke-width:.22px;">Ordres :</span>
<span class="t" style="left:453.0px;top:253.8px;font-size:21.5px;color:#111;font-family:'DejaVu Sans','Liberation Sans',sans-serif;font-weight:700;letter-spacing:-1.97px;">0</span>
<svg style="left:472px;top:250px" width="26" height="24" viewBox="0 0 26 24"><path d="M1 1h19l5 5v17H1z" fill="#c2c2be" stroke="#b0b0ac" stroke-width="1.400"/><path d="M20 1v5h5" fill="#d8d8d4"/><path d="M5.500 5.500l14 13M19.500 5.500l-14 13" stroke="#dededa" stroke-width="5.500"/><rect x="9" y="8.500" width="7" height="7" fill="#b4b4b0"/></svg>
<span class="t" style="left:518.0px;top:253.8px;font-size:21.5px;color:#111;font-family:'DejaVu Sans','Liberation Sans',sans-serif;letter-spacing:0.25px;-webkit-text-stroke-width:.22px;">/</span>
<span class="t" style="left:538.8px;top:253.8px;font-size:21.5px;color:#111;font-family:'DejaVu Sans','Liberation Sans',sans-serif;font-weight:700;letter-spacing:-1.97px;">0</span>
<svg style="left:557px;top:248px" width="30" height="28" viewBox="0 0 30 28"><g fill="none" stroke="#1a50c0"><circle cx="8.800" cy="12" r="7" stroke-width="5.400" stroke-dasharray="3.300 2.200"/><circle cx="8.800" cy="12" r="5.200" stroke-width="3"/><circle cx="22.300" cy="20.800" r="4.800" stroke-width="3.600" stroke-dasharray="2.300 1.470"/><circle cx="22.300" cy="20.800" r="3.600" stroke-width="2"/></g></svg>
<span class="t" style="left:884.6px;top:253.8px;font-size:21.5px;color:#111;font-family:'DejaVu Sans','Liberation Sans',sans-serif;letter-spacing:-0.18px;-webkit-text-stroke-width:.22px;">Position :</span>
<span class="t" style="left:998.7px;top:253.8px;font-size:21.5px;color:#111;font-family:'DejaVu Sans','Liberation Sans',sans-serif;font-weight:700;letter-spacing:-1.97px;">0</span>
<svg style="left:1018.5px;top:250px" width="26" height="24" viewBox="0 0 26 24"><path d="M1 1h19l5 5v17H1z" fill="#c2c2be" stroke="#b0b0ac" stroke-width="1.400"/><path d="M20 1v5h5" fill="#d8d8d4"/><path d="M5.500 5.500l14 13M19.500 5.500l-14 13" stroke="#dededa" stroke-width="5.500"/><rect x="9" y="8.500" width="7" height="7" fill="#b4b4b0"/></svg>
<span class="t" style="left:1064.0px;top:253.8px;font-size:21.5px;color:#111;font-family:'DejaVu Sans','Liberation Sans',sans-serif;letter-spacing:0.25px;-webkit-text-stroke-width:.22px;">/</span>
<span class="t" style="left:1084.6px;top:253.8px;font-size:21.5px;color:#111;font-family:'DejaVu Sans','Liberation Sans',sans-serif;font-weight:700;letter-spacing:-1.97px;">0</span>
<svg style="left:1102px;top:248px" width="30" height="28" viewBox="0 0 30 28"><g fill="none" stroke="#1a50c0"><circle cx="8.800" cy="12" r="7" stroke-width="5.400" stroke-dasharray="3.300 2.200"/><circle cx="8.800" cy="12" r="5.200" stroke-width="3"/><circle cx="22.300" cy="20.800" r="4.800" stroke-width="3.600" stroke-dasharray="2.300 1.470"/><circle cx="22.300" cy="20.800" r="3.600" stroke-width="2"/></g></svg>
<div style="left:64px;top:284px;width:1374px;height:2px;background:#9aa9b3;"></div>
<div style="left:224px;top:294px;width:36px;height:35px;background:linear-gradient(#fbfcfd,#dfe6ea);border:1.500px solid #98a5ae;border-radius:5px;"></div>
<svg style="left:229px;top:298px" width="26" height="27" viewBox="0 0 26 27"><path d="M3 23.500l11-11a6 6 0 0 1 7.500-7.500l-4 4 1 3.500 3.500 1 4-4A6 6 0 0 1 18 16.500l-11 11z" transform="translate(-1 -3)" fill="#fff" stroke="#222" stroke-width="2" stroke-linejoin="round"/></svg>
<svg style="left:224px;top:336px" width="36" height="27" viewBox="0 0 36 27"><rect x="0" y="0" width="36" height="27" rx="4" fill="#a9b4bb"/><g fill="#fff"><rect x="4" y="5" width="4" height="4"/><rect x="10" y="5" width="4" height="4"/><rect x="16" y="5" width="4" height="4"/><rect x="22" y="5" width="4" height="4"/><rect x="28" y="5" width="4" height="4"/><rect x="4" y="11" width="4" height="4"/><rect x="10" y="11" width="4" height="4"/><rect x="16" y="11" width="4" height="4"/><rect x="22" y="11" width="4" height="4"/><rect x="28" y="11" width="4" height="4"/><rect x="9" y="18" width="18" height="4"/></g></svg>
<span class="t" style="left:302.5px;top:289.8px;font-size:21.5px;color:#111;font-family:'DejaVu Sans','Liberation Sans',sans-serif;letter-spacing:-0.70px;-webkit-text-stroke-width:.22px;">Qté</span>
<div style="left:266.5px;top:316.5px;width:110.5px;height:42.5px;background:#fff;border:2px solid #a9b8c2;border-radius:5px;box-shadow:inset 0 2px 3px rgba(0,0,0,.12);"></div>
<span class="t" style="left:360.0px;top:327.4px;font-size:22px;color:#111;font-family:'DejaVu Sans','Liberation Sans',sans-serif;-webkit-text-stroke-width:.22px;">1</span>
<div style="left:386px;top:300px;width:2px;height:63px;background:#a9b5bd;"></div>
<div style="left:464.5px;top:300px;width:2px;height:63px;background:#a9b5bd;"></div>
<div style="left:534px;top:300px;width:2px;height:63px;background:#a9b5bd;"></div>
<div style="left:886.5px;top:300px;width:2px;height:63px;background:#a9b5bd;"></div>
<span class="t" style="left:396.7px;top:289.8px;font-size:21.5px;color:#111;font-family:'DejaVu Sans','Liberation Sans',sans-serif;letter-spacing:-0.59px;-webkit-text-stroke-width:.22px;">Limite</span>
<div style="left:397.5px;top:316.5px;width:55.5px;height:55px;background:linear-gradient(#f4f7f9,#d3dde3);border:1.500px solid #9aa8b1;border-radius:5px;"></div>
<svg style="left:402.5px;top:321.5px" width="45.5" height="45" viewBox="0 0 45 45"><path d="M3 1.500h20l8 8v33H3z" fill="#f2f5f7" stroke="#8a949c" stroke-width="1.600"/><path d="M23 1.500v8h8" fill="#dfe5ea" stroke="#8a949c" stroke-width="1.400"/><g transform="translate(6.500 3)"><path d="M0 7l8 8 8-8h-5V0h-6v7z" fill="#e03030"/></g><g transform="translate(6.500 24)"><path d="M0 8l8-8 8 8h-5v7h-6v-7z" fill="#18a018"/></g><rect x="21" y="22" width="22" height="10" fill="#eef1f3" stroke="#8a949c" stroke-width="1.600"/><rect x="21" y="32" width="22" height="10" fill="#c9d0d6" stroke="#8a949c" stroke-width="1.600"/></svg>
<span class="t" style="left:478.3px;top:289.8px;font-size:21.5px;color:#111;font-family:'DejaVu Sans','Liberation Sans',sans-serif;letter-spacing:-0.35px;-webkit-text-stroke-width:.22px;">Stop</span>
<div style="left:471.5px;top:316.5px;width:56px;height:55px;background:linear-gradient(#f4f7f9,#d3dde3);border:1.500px solid #9aa8b1;border-radius:5px;"></div>
<svg style="left:476.5px;top:321.5px" width="46" height="45" viewBox="0 0 45 45"><path d="M3 1.500h20l8 8v33H3z" fill="#f2f5f7" stroke="#8a949c" stroke-width="1.600"/><path d="M23 1.500v8h8" fill="#dfe5ea" stroke="#8a949c" stroke-width="1.400"/><g transform="translate(6.500 3)"><path d="M0 8l8-8 8 8h-5v7h-6v-7z" fill="#18a018"/></g><g transform="translate(6.500 24)"><path d="M0 7l8 8 8-8h-5V0h-6v7z" fill="#e03030"/></g><rect x="21" y="22" width="22" height="10" fill="#eef1f3" stroke="#8a949c" stroke-width="1.600"/><rect x="21" y="32" width="22" height="10" fill="#c9d0d6" stroke="#8a949c" stroke-width="1.600"/></svg>
<span class="t" style="left:570.2px;top:289.8px;font-size:21.5px;color:#111;font-family:'DejaVu Sans','Liberation Sans',sans-serif;letter-spacing:-0.11px;-webkit-text-stroke-width:.22px;">Vente MKT</span>
<div style="left:542px;top:316px;width:165.5px;height:57px;background:linear-gradient(#ee5a5e,#e4474c 55%,#d83f44);border-radius:5px;border:1px solid #c83a3e;"></div>
<span class="t" style="left:548.0px;top:323.1px;font-size:46px;color:#fff;font-family:'DejaVu Sans','Liberation Sans',sans-serif;letter-spacing:-2.27px;-webkit-text-stroke-width:.22px;text-shadow:-1px -1px 1px rgba(120,0,0,.35);">13</span>
<span class="t" style="left:618.5px;top:323.1px;font-size:46px;color:#fff;font-family:'DejaVu Sans','Liberation Sans',sans-serif;letter-spacing:-1.94px;-webkit-text-stroke-width:.22px;text-shadow:-1px -1px 1px rgba(120,0,0,.35);">102</span>
<span class="t" style="left:741.8px;top:289.8px;font-size:21.5px;color:#111;font-family:'DejaVu Sans','Liberation Sans',sans-serif;letter-spacing:0.13px;-webkit-text-stroke-width:.22px;">Achat MKT</span>
<div style="left:714px;top:316px;width:165.5px;height:57px;background:linear-gradient(#3cc444,#2fb037 55%,#27a42f);border-radius:5px;border:1px solid #22962a;"></div>
<span class="t" style="left:720.0px;top:323.1px;font-size:46px;color:#fff;font-family:'DejaVu Sans','Liberation Sans',sans-serif;letter-spacing:-2.27px;-webkit-text-stroke-width:.22px;text-shadow:-1px -1px 1px rgba(120,0,0,.35);">13</span>
<span class="t" style="left:789.5px;top:323.1px;font-size:46px;color:#fff;font-family:'DejaVu Sans','Liberation Sans',sans-serif;letter-spacing:-1.44px;-webkit-text-stroke-width:.22px;text-shadow:-1px -1px 1px rgba(120,0,0,.35);">104</span>
<div style="left:905.5px;top:300px;width:24px;height:24px;background:#fff;border:2px solid #a9b8c2;border-radius:5px;"></div>
<span class="t" style="left:937.5px;top:301.8px;font-size:21.5px;color:#111;font-family:'DejaVu Sans','Liberation Sans',sans-serif;letter-spacing:0.36px;-webkit-text-stroke-width:.22px;">T</span>
<div style="left:960px;top:288.5px;width:27px;height:42px;background:#fff;border:2px solid #a9b8c2;border-radius:5px;"></div>
<span class="t" style="left:965.0px;top:300.8px;font-size:21.5px;color:#a9b1b7;font-family:'DejaVu Sans','Liberation Sans',sans-serif;-webkit-text-stroke-width:.22px;">3</span>
<span class="t" style="left:993.0px;top:300.8px;font-size:21.5px;color:#111;font-family:'DejaVu Sans','Liberation Sans',sans-serif;letter-spacing:-0.76px;-webkit-text-stroke-width:.22px;">pts</span>
<div style="left:905.5px;top:345.5px;width:24px;height:24px;background:#fff;border:2px solid #a9b8c2;border-radius:5px;"></div>
<span class="t" style="left:937.5px;top:347.3px;font-size:21.5px;color:#111;font-family:'DejaVu Sans','Liberation Sans',sans-serif;letter-spacing:-0.16px;-webkit-text-stroke-width:.22px;">S</span>
<div style="left:960px;top:334.5px;width:41px;height:42px;background:#fff;border:2px solid #a9b8c2;border-radius:5px;"></div>
<span class="t" style="left:965.0px;top:346.3px;font-size:21.5px;color:#a9b1b7;font-family:'DejaVu Sans','Liberation Sans',sans-serif;-webkit-text-stroke-width:.22px;">30</span>
<span class="t" style="left:1007.0px;top:346.3px;font-size:21.5px;color:#111;font-family:'DejaVu Sans','Liberation Sans',sans-serif;letter-spacing:-0.76px;-webkit-text-stroke-width:.22px;">pts</span>
<div style="left:1047.5px;top:286px;width:5px;height:95px;background:#a9b8c2;"></div>
<span class="t" style="left:1078.3px;top:289.8px;font-size:21.5px;color:#111;font-family:'DejaVu Sans','Liberation Sans',sans-serif;letter-spacing:-0.42px;-webkit-text-stroke-width:.22px;">Perte €</span>
<div style="left:1060.5px;top:318.5px;width:110.5px;height:42.5px;background:#fff;border:2px solid #a9b8c2;border-radius:5px;box-shadow:inset 0 2px 3px rgba(0,0,0,.12);"></div>
<span class="t" style="left:1122.0px;top:328.9px;font-size:22px;color:#111;font-family:'DejaVu Sans','Liberation Sans',sans-serif;letter-spacing:-0.83px;-webkit-text-stroke-width:.22px;">100</span>
<span class="t" style="left:1182.0px;top:290.8px;font-size:21.5px;color:#111;font-family:'DejaVu Sans','Liberation Sans',sans-serif;letter-spacing:-0.11px;-webkit-text-stroke-width:.22px;">Qté Auto</span>
<div style="left:1200px;top:316.5px;width:55px;height:55px;background:linear-gradient(#f4f7f9,#d3dde3);border:1.500px solid #9aa8b1;border-radius:5px;"></div>
<svg style="left:1205px;top:321.5px" width="45" height="45" viewBox="0 0 45 45"><path d="M3 1.500h20l8 8v33H3z" fill="#f2f5f7" stroke="#8a949c" stroke-width="1.600"/><path d="M23 1.500v8h8" fill="#dfe5ea" stroke="#8a949c" stroke-width="1.400"/><g transform="translate(6.500 3)"><path d="M0 7l8 8 8-8h-5V0h-6v7z" fill="#e03030"/></g><g transform="translate(6.500 24)"><path d="M0 8l8-8 8 8h-5v7h-6v-7z" fill="#18a018"/></g><rect x="21" y="22" width="22" height="17" fill="#eef1f3" stroke="#8a949c" stroke-width="1.600"/><path d="M27 26.500l9 8M36 26.500l-9 8" stroke="#8a949c" stroke-width="2.400"/><path d="M22 42h21" stroke="#8a949c" stroke-width="3"/></svg>
<div style="left:1053px;top:380px;width:385px;height:1.5px;background:#c4d3dc;"></div>
<svg style="left:64px;top:416px" width="1258" height="1384" viewBox="64 416 1258 1384" shape-rendering="auto"><defs><linearGradient id="bgL" x1="0" y1="0" x2="0" y2="1"><stop offset="0" stop-color="#303030"/><stop offset=".35" stop-color="#262626"/><stop offset=".7" stop-color="#151515"/><stop offset="1" stop-color="#070707"/></linearGradient><linearGradient id="crL" x1="0" x2="1"><stop offset="0" stop-color="#f68d8d"/><stop offset="1" stop-color="#d65a5a"/></linearGradient><linearGradient id="cgL" x1="0" x2="1"><stop offset="0" stop-color="#72ea72"/><stop offset="1" stop-color="#38c038"/></linearGradient></defs><rect x="64" y="416" width="1258" height="1072" fill="url(#bgL)"/><rect x="64" y="1488" width="1258" height="312" fill="#050505"/><path d="M125.0 416V1800M242.4 416V1800M359.9 416V1800M477.4 416V1800M594.8 416V1800M712.2 416V1800M829.7 416V1800M947.1 416V1800M1064.6 416V1800M1182.0 416V1800M1299.5 416V1800M64 472.8H1322M64 577.2H1322M64 681.6H1322M64 786.0H1322M64 890.4H1322M64 994.8H1322M64 1099.2H1322M64 1203.6H1322M64 1308.0H1322M64 1412.4H1322" stroke="rgba(112,122,142,.32)" stroke-width="1.600" stroke-dasharray="8 8" fill="none"/><rect x="64" y="1490" width="1258" height="310" fill="#040404"/><path d="M125.0 1490V1800M242.4 1490V1800M359.9 1490V1800M477.4 1490V1800M594.8 1490V1800M712.2 1490V1800M829.7 1490V1800M947.1 1490V1800M1064.6 1490V1800M1182.0 1490V1800M1299.5 1490V1800M64 1549H1322M64 1587.5H1322M64 1626H1322M64 1665H1322" stroke="rgba(112,122,142,.3)" stroke-width="1.600" stroke-dasharray="8 8" fill="none"/><path d="M64 1510.500H1322" stroke="#2c2c34" stroke-width="2"/><text x="901" y="425.500" font-family="DejaVu Sans,sans-serif" font-size="37.500" fill="#4a505a" textLength="398" lengthAdjust="spacingAndGlyphs">Micro DAX Full0922</text><path d="M64 561L1301 565.500" stroke="#fb82c2" stroke-width="6.600" stroke-dasharray="29.700 26.400" fill="none"/><path d="M64 660H1322" stroke="#c4c4c4" stroke-width="3.5"/><path d="M86.8 679.5V739.7" stroke="#fff" stroke-width="2.200"/><rect x="70.8" y="687.4" width="32" height="34.8" fill="url(#cgL)" stroke="#fff" stroke-width="2"/><path d="M125.9 675.4V739.7" stroke="#fff" stroke-width="2.200"/><rect x="109.9" y="697.4" width="32" height="36.9" fill="url(#crL)" stroke="#fff" stroke-width="2"/><path d="M165.1 680.2V745.6" stroke="#fff" stroke-width="2.200"/><rect x="149.1" y="719.4" width="32" height="3.2" fill="url(#cgL)" stroke="#fff" stroke-width="2"/><path d="M204.2 696.0V783.7" stroke="#fff" stroke-width="2.200"/><rect x="188.2" y="713.2" width="32" height="47.2" fill="url(#crL)" stroke="#fff" stroke-width="2"/><path d="M243.4 753.8V853.9" stroke="#fff" stroke-width="2.200"/><rect x="227.4" y="761.4" width="32" height="86.7" fill="url(#crL)" stroke="#fff" stroke-width="2"/><path d="M282.6 826.0V963.6" stroke="#fff" stroke-width="2.200"/><rect x="266.6" y="849.4" width="32" height="86.7" fill="url(#crL)" stroke="#fff" stroke-width="2"/><path d="M321.7 890.0V1067.8" stroke="#fff" stroke-width="2.200"/><rect x="305.7" y="943.6" width="32" height="76.4" fill="url(#crL)" stroke="#fff" stroke-width="2"/><path d="M360.9 1000.0V1067.8" stroke="#fff" stroke-width="2.200"/><rect x="344.9" y="1021.3" width="32" height="34.8" fill="url(#crL)" stroke="#fff" stroke-width="2"/><path d="M400.0 935.7V1083.6" stroke="#fff" stroke-width="2.200"/><rect x="384.0" y="959.4" width="32" height="96.7" fill="url(#cgL)" stroke="#fff" stroke-width="2"/><path d="M439.1 945.7V1083.3" stroke="#fff" stroke-width="2.200"/><rect x="423.1" y="953.6" width="32" height="128.7" fill="url(#crL)" stroke="#fff" stroke-width="2"/><path d="M478.3 1000.0V1074.0" stroke="#fff" stroke-width="2.200"/><rect x="462.3" y="1053.3" width="32" height="13.1" fill="url(#crL)" stroke="#fff" stroke-width="2"/><path d="M517.4 1010.0V1083.6" stroke="#fff" stroke-width="2.200"/><rect x="501.4" y="1015.5" width="32" height="46.5" fill="url(#cgL)" stroke="#fff" stroke-width="2"/><path d="M556.6 993.8V1121.4" stroke="#fff" stroke-width="2.200"/><rect x="540.6" y="1021.3" width="32" height="86.7" fill="url(#crL)" stroke="#fff" stroke-width="2"/><path d="M595.8 1055.7V1121.4" stroke="#fff" stroke-width="2.200"/><rect x="579.8" y="1067.4" width="32" height="36.9" fill="url(#cgL)" stroke="#fff" stroke-width="2"/><path d="M634.9 1036.1V1183.3" stroke="#fff" stroke-width="2.200"/><rect x="618.9" y="1053.6" width="32" height="122.8" fill="url(#crL)" stroke="#fff" stroke-width="2"/><path d="M674.0 1166.4V1239.7" stroke="#fff" stroke-width="2.200"/><rect x="658.0" y="1177.8" width="32" height="20.3" fill="url(#crL)" stroke="#fff" stroke-width="2"/><path d="M713.2 1186.4V1277.5" stroke="#fff" stroke-width="2.200"/><rect x="697.2" y="1199.4" width="32" height="66.8" fill="url(#crL)" stroke="#fff" stroke-width="2"/><path d="M752.3 1238.0V1304.0" stroke="#fff" stroke-width="2.200"/><rect x="736.3" y="1255.5" width="32" height="36.8" fill="url(#crL)" stroke="#fff" stroke-width="2"/><path d="M64 714.800H190L222 713L404 718L576 726L753 737" stroke="#e6e6e6" stroke-width="2.400" stroke-dasharray="8 8" stroke-dashoffset="-6" fill="none"/><path d="M64 830.5H1322" stroke="#0c8a0c" stroke-width="1.8" stroke-dasharray="10 8"/><path d="M64 876.6H1322" stroke="#fa0404" stroke-width="1.8" stroke-dasharray="10 8"/><path d="M64 953H1322" stroke="#0c8a0c" stroke-width="1.8" stroke-dasharray="10 8"/><path d="M64 567.800L169 599L204.400 614.900L283.500 661.300L362.600 716.400L438 763.800L469.200 781.700L558.600 827.400L596.400 846L692.700 917.500L752.900 969" fill="none" stroke="#cc6a64" stroke-width="2.200" opacity=".92"/><path d="M64 1244.5H1300" stroke="#e88080" stroke-width="1.6" stroke-dasharray="12 6"/><path d="M64 1243.8H1322" stroke="#078a07" stroke-width="3.6" stroke-dasharray="42 18"/><path d="M64 1263.8H1322" stroke="#078a07" stroke-width="3.6" stroke-dasharray="42 18"/><path d="M64 1457.6H1303" stroke="#fa0404" stroke-width="4" stroke-dasharray="42 18"/><path d="M630.3 1192.5h9v12h6.500l-11 13-11-13h6.500z" fill="#f06468"/><path d="M706.5 1292.0L719.5 1305.0M719.5 1292.0L706.5 1305.0" stroke="#3cc84c" stroke-width="7.500" stroke-linecap="square"/><path d="M648 1150.5l9.500-6.500v13z" fill="#f47878"/><path d="M699 1198.5l-9.500-7v14z" fill="#58dc58"/><path d="M64 523.8H1322" stroke="#fa0404" stroke-width="4"/><path d="M64 785.8H1322" stroke="#fa0404" stroke-width="4"/><path d="M64 1045.8H1322" stroke="#fa0404" stroke-width="4"/><path d="M64 1305.8H1322" stroke="#fa0404" stroke-width="4"/><rect x="64" y="1487" width="1258" height="2.600" fill="#c3d2da"/><path d="M64 1569H1322" stroke="#3c3cd8" stroke-width="2.4"/><path d="M64 1607H1322" stroke="#3c3cd8" stroke-width="2.4"/><path d="M64 1645H1322" stroke="#3c3cd8" stroke-width="2.4"/><clipPath id="rcL"><rect x="64" y="1646" width="1258" height="60"/></clipPath><path d="M63.6 1622.1L86.8 1618.9L124 1624.8L165.6 1622.7L202.8 1628.7L241.5 1637.6L280.2 1645.6L318.8 1654L362 1656L400.7 1636.7L436.4 1645.9L479.5 1644.4L516.7 1634.6L555.4 1642.7L597 1636.1L634.2 1644.4L678.9 1646.5L753.2 1654.3V1640H63.6z" fill="#063c06" clip-path="url(#rcL)"/><path d="M63.6 1622.1L86.8 1618.9L124 1624.8L165.6 1622.7L202.8 1628.7L241.5 1637.6L280.2 1645.6L318.8 1654L362 1656L400.7 1636.7L436.4 1645.9L479.5 1644.4L516.7 1634.6L555.4 1642.7L597 1636.1L634.2 1644.4L678.9 1646.5L753.2 1654.3" fill="none" stroke="#b9b9b9" stroke-width="2.200"/></svg>
<div style="left:64px;top:381px;width:1258px;height:35px;background:linear-gradient(#e4eef4,#d7e4ec);border-bottom:2px solid #9db1be;"></div>
<div style="left:101px;top:383px;width:2px;height:31px;background:#a9bac5;"></div>
<div style="left:140.5px;top:383px;width:2px;height:31px;background:#a9bac5;"></div>
<div style="left:223px;top:383px;width:2px;height:31px;background:#a9bac5;"></div>
<div style="left:373px;top:383px;width:2px;height:31px;background:#a9bac5;"></div>
<div style="left:566.5px;top:383px;width:2px;height:31px;background:#a9bac5;"></div>
<div style="left:780.5px;top:383px;width:2px;height:31px;background:#a9bac5;"></div>
<div style="left:980.5px;top:383px;width:2px;height:31px;background:#a9bac5;"></div>
<div style="left:1198px;top:383px;width:2px;height:31px;background:#a9bac5;"></div>
<div style="left:70px;top:386px;width:26.5px;height:24px;background:linear-gradient(#fff,#e4ebef);border:1.500px solid #a9b6be;"></div>
<svg style="left:76px;top:391px" width="14" height="14" viewBox="0 0 14 14"><path d="M0 5l7 7 7-7h-4.500V0h-5v5z" fill="#e02828"/></svg>
<div style="left:110px;top:386px;width:26.5px;height:24px;background:linear-gradient(#fff,#e4ebef);border:1.500px solid #a9b6be;"></div>
<svg style="left:116px;top:391px" width="14" height="14" viewBox="0 0 14 14"><path d="M0 7l7-7 7 7h-4.500v5h-5V7z" fill="#18a018"/></svg>
<div style="left:149.4px;top:387px;width:10px;height:22px;background:#3fc24a;"></div>
<div style="left:159.4px;top:387px;width:10.5px;height:22px;background:#e05a5e;"></div>
<span class="t" style="left:176.9px;top:387.8px;font-size:21.5px;color:#111;font-family:'DejaVu Sans','Liberation Sans',sans-serif;letter-spacing:-0.16px;-webkit-text-stroke-width:.22px;">Prix</span>
<svg style="left:231px;top:385px" width="25" height="27" viewBox="0 0 25 27"><path d="M1.500 10.500h12v14h-12z" fill="#e4ecf8" stroke="#b4c8ec" stroke-width="1.400"/><path d="M6 6h12v14H6z" fill="#eef2fa" stroke="#6a8cdc" stroke-width="1.600"/><path d="M11 1.500h8l4.500 4.500v11H11z" fill="#fff" stroke="#2450c8" stroke-width="2"/><path d="M18.500 1.500v5h5" fill="none" stroke="#2450c8" stroke-width="1.600"/></svg>
<span class="t" style="left:262.0px;top:387.8px;font-size:21.5px;color:#111;font-family:'DejaVu Sans','Liberation Sans',sans-serif;letter-spacing:-0.22px;-webkit-text-stroke-width:.22px;">Actualités</span>
<div style="left:381.8px;top:387px;width:20px;height:22px;background:#c2c2c2;"></div>
<span class="t" style="left:408.3px;top:387.8px;font-size:21.5px;color:#111;font-family:'DejaVu Sans','Liberation Sans',sans-serif;letter-spacing:-0.22px;-webkit-text-stroke-width:.22px;">Clôture (J, Pré)</span>
<div style="left:575.9px;top:387px;width:20px;height:22px;background:#4fd054;"></div>
<span class="t" style="left:602.6px;top:387.8px;font-size:21.5px;color:#111;font-family:'DejaVu Sans','Liberation Sans',sans-serif;letter-spacing:-0.43px;-webkit-text-stroke-width:.22px;">Plus Haut (J, Pré)</span>
<div style="left:789.8px;top:387px;width:20px;height:22px;background:#e06064;"></div>
<span class="t" style="left:816.9px;top:387.8px;font-size:21.5px;color:#111;font-family:'DejaVu Sans','Liberation Sans',sans-serif;letter-spacing:-0.56px;-webkit-text-stroke-width:.22px;">Plus Bas (J, Pré)</span>
<div style="left:989.8px;top:387px;width:7px;height:22px;background:#f01010;"></div>
<div style="left:996.8px;top:387px;width:6px;height:22px;background:#bdbdbd;"></div>
<div style="left:1002.8px;top:387px;width:7px;height:22px;background:#108a10;"></div>
<div style="left:1208px;top:387px;width:7px;height:22px;background:#f01010;"></div>
<div style="left:1215px;top:387px;width:6px;height:22px;background:#bdbdbd;"></div>
<div style="left:1221px;top:387px;width:7px;height:22px;background:#108a10;"></div>
<span class="t" style="left:1016.9px;top:387.8px;font-size:21.5px;color:#111;font-family:'DejaVu Sans','Liberation Sans',sans-serif;letter-spacing:-0.16px;-webkit-text-stroke-width:.22px;">Points pivots (M)</span>
<span class="t" style="left:1235.0px;top:387.8px;font-size:21.5px;color:#111;font-family:'DejaVu Sans','Liberation Sans',sans-serif;letter-spacing:-0.45px;-webkit-text-stroke-width:.22px;">Points pi</span>
<span class="t" style="left:68.5px;top:1465.3px;font-size:21.5px;color:#c6c6c6;font-family:'DejaVu Sans','Liberation Sans',sans-serif;letter-spacing:-0.11px;-webkit-text-stroke:.5px #c6c6c6;text-shadow:1.500px 1.500px 0 #5a5a5a;">ProRealTime.com – Temps Réel</span>
<div style="left:64px;top:1490px;width:122.5px;height:33.5px;background:#dfeaf1;border-right:2px solid #a9bac5;border-bottom:2px solid #a9bac5;"></div>
<div style="left:70px;top:1496.5px;width:20px;height:19.5px;background:#c2c2c2;"></div>
<span class="t" style="left:97.0px;top:1495.8px;font-size:21.5px;color:#111;font-family:'DejaVu Sans','Liberation Sans',sans-serif;letter-spacing:-0.86px;-webkit-text-stroke-width:.22px;">RSI (14)</span>
<span class="t" style="left:69.3px;top:497.8px;font-size:21.5px;color:#fa0404;font-family:'DejaVu Sans','Liberation Sans',sans-serif;letter-spacing:-0.21px;-webkit-text-stroke:.55px #fa0404;">13 250</span>
<span class="t" style="left:69.3px;top:759.8px;font-size:21.5px;color:#fa0404;font-family:'DejaVu Sans','Liberation Sans',sans-serif;letter-spacing:-0.21px;-webkit-text-stroke:.55px #fa0404;">13 200</span>
<span class="t" style="left:69.3px;top:1019.3px;font-size:21.5px;color:#fa0404;font-family:'DejaVu Sans','Liberation Sans',sans-serif;letter-spacing:-0.21px;-webkit-text-stroke:.55px #fa0404;">13 150</span>
<span class="t" style="left:69.3px;top:1279.3px;font-size:21.5px;color:#fa0404;font-family:'DejaVu Sans','Liberation Sans',sans-serif;letter-spacing:-0.21px;-webkit-text-stroke:.55px #fa0404;">13 100</span>
<span class="t" style="left:1249.3px;top:636.4px;font-size:20px;color:#bdbdbd;font-family:'DejaVu Sans','Liberation Sans',sans-serif;font-weight:700;letter-spacing:-1.45px;">Piv 4h</span>
<span class="t" style="left:1255.0px;top:807.5px;font-size:20px;color:#0c8a0c;font-family:'DejaVu Sans','Liberation Sans',sans-serif;font-weight:700;letter-spacing:-1.42px;">mS1 J</span>
<span class="t" style="left:1247.4px;top:852.7px;font-size:20px;color:#fa0404;font-family:'DejaVu Sans','Liberation Sans',sans-serif;font-weight:700;letter-spacing:-1.51px;">mR2 S</span>
<span class="t" style="left:1233.7px;top:929.1px;font-size:20px;color:#0c8a0c;font-family:'DejaVu Sans','Liberation Sans',sans-serif;font-weight:700;letter-spacing:-1.26px;">mS1 4h</span>
<span class="t" style="left:1274.4px;top:1240.9px;font-size:20px;color:#0c8a0c;font-family:'DejaVu Sans','Liberation Sans',sans-serif;font-weight:700;letter-spacing:-1.43px;">S1 J</span>
<span class="t" style="left:1252.0px;top:1220.9px;font-size:20px;color:#0c8a0c;font-family:'DejaVu Sans','Liberation Sans',sans-serif;font-weight:700;letter-spacing:-1.09px;">S1 4h</span>
<span class="t" style="left:1203.0px;top:1220.9px;font-size:20px;color:#e87878;font-family:'DejaVu Sans','Liberation Sans',sans-serif;font-weight:700;letter-spacing:-1.55px;">Bas (J, Pré)</span>
<span class="t" style="left:1266.0px;top:1434.6px;font-size:20px;color:#fa0404;font-family:'DejaVu Sans','Liberation Sans',sans-serif;font-weight:700;letter-spacing:-1.30px;">R1 S</span>
<div style="left:1322px;top:381px;width:1.5px;height:1419px;background:#a9bcc8;"></div>
<div style="left:1322px;top:1487px;width:116px;height:1.5px;background:#b9c9d3;"></div>
<span class="t" style="left:1337.5px;top:462.8px;font-size:21px;color:#111;font-family:'DejaVu Sans','Liberation Sans',sans-serif;letter-spacing:-0.08px;-webkit-text-stroke:.3px #111;">13 260</span>
<div style="left:1323px;top:471.8px;width:8px;height:1.6px;background:#8a9caa;"></div>
<span class="t" style="left:1337.5px;top:567.2px;font-size:21px;color:#111;font-family:'DejaVu Sans','Liberation Sans',sans-serif;letter-spacing:-0.08px;-webkit-text-stroke:.3px #111;">13 240</span>
<div style="left:1323px;top:576.2px;width:8px;height:1.6px;background:#8a9caa;"></div>
<span class="t" style="left:1337.5px;top:671.6px;font-size:21px;color:#111;font-family:'DejaVu Sans','Liberation Sans',sans-serif;letter-spacing:-0.08px;-webkit-text-stroke:.3px #111;">13 220</span>
<div style="left:1323px;top:680.6px;width:8px;height:1.6px;background:#8a9caa;"></div>
<span class="t" style="left:1337.5px;top:880.4px;font-size:21px;color:#111;font-family:'DejaVu Sans','Liberation Sans',sans-serif;letter-spacing:-0.08px;-webkit-text-stroke:.3px #111;">13 180</span>
<div style="left:1323px;top:889.4px;width:8px;height:1.6px;background:#8a9caa;"></div>
<span class="t" style="left:1337.5px;top:984.8px;font-size:21px;color:#111;font-family:'DejaVu Sans','Liberation Sans',sans-serif;letter-spacing:-0.08px;-webkit-text-stroke:.3px #111;">13 160</span>
<div style="left:1323px;top:993.8px;width:8px;height:1.6px;background:#8a9caa;"></div>
<span class="t" style="left:1337.5px;top:1089.2px;font-size:21px;color:#111;font-family:'DejaVu Sans','Liberation Sans',sans-serif;letter-spacing:-0.08px;-webkit-text-stroke:.3px #111;">13 140</span>
<div style="left:1323px;top:1098.2px;width:8px;height:1.6px;background:#8a9caa;"></div>
<span class="t" style="left:1337.5px;top:1193.6px;font-size:21px;color:#111;font-family:'DejaVu Sans','Liberation Sans',sans-serif;letter-spacing:-0.08px;-webkit-text-stroke:.3px #111;">13 120</span>
<div style="left:1323px;top:1202.6px;width:8px;height:1.6px;background:#8a9caa;"></div>
<span class="t" style="left:1337.5px;top:1298.0px;font-size:21px;color:#111;font-family:'DejaVu Sans','Liberation Sans',sans-serif;letter-spacing:-0.08px;-webkit-text-stroke:.3px #111;">13 100</span>
<div style="left:1323px;top:1307px;width:8px;height:1.6px;background:#8a9caa;"></div>
<span class="t" style="left:1337.5px;top:1402.4px;font-size:21px;color:#111;font-family:'DejaVu Sans','Liberation Sans',sans-serif;letter-spacing:-0.08px;-webkit-text-stroke:.3px #111;">13 080</span>
<div style="left:1323px;top:1411.4px;width:8px;height:1.6px;background:#8a9caa;"></div>
<span class="t" style="left:1337.5px;top:774.6px;font-size:22.6px;color:#111;font-family:'DejaVu Sans','Liberation Sans',sans-serif;font-weight:700;letter-spacing:-0.25px;">13 200</span>
<div style="left:1323px;top:784.5px;width:8px;height:1.6px;background:#8a9caa;"></div>
<div style="left:1323px;top:522.8px;width:5px;height:1.6px;background:#8a9caa;"></div>
<div style="left:1323px;top:627.5px;width:5px;height:1.6px;background:#8a9caa;"></div>
<div style="left:1323px;top:732.5px;width:5px;height:1.6px;background:#8a9caa;"></div>
<div style="left:1323px;top:836.5px;width:5px;height:1.6px;background:#8a9caa;"></div>
<div style="left:1323px;top:941.5px;width:5px;height:1.6px;background:#8a9caa;"></div>
<div style="left:1323px;top:1045px;width:5px;height:1.6px;background:#8a9caa;"></div>
<div style="left:1323px;top:1149px;width:5px;height:1.6px;background:#8a9caa;"></div>
<div style="left:1323px;top:1253.5px;width:5px;height:1.6px;background:#8a9caa;"></div>
<div style="left:1323px;top:1358px;width:5px;height:1.6px;background:#8a9caa;"></div>
<div style="left:1323px;top:1462px;width:5px;height:1.6px;background:#8a9caa;"></div>
<div style="left:1323px;top:396px;width:10px;height:2px;background:#b9c2c8;"></div>
<div style="left:1332.5px;top:383.5px;width:83px;height:29.5px;background:linear-gradient(#2a2a2a,#000 60%);border:2px solid #8d9aa3;"></div>
<span class="t" style="left:1337.5px;top:388.3px;font-size:21px;color:#b4b4b4;font-family:'DejaVu Sans','Liberation Sans',sans-serif;letter-spacing:-0.08px;-webkit-text-stroke-width:.22px;">13 275</span>
<div style="left:1332.5px;top:645px;width:83px;height:30px;background:linear-gradient(#2a2a2a,#000 60%);border:2px solid #8d9aa3;"></div>
<span class="t" style="left:1337.5px;top:650.0px;font-size:21px;color:#c4c4c4;font-family:'DejaVu Sans','Liberation Sans',sans-serif;letter-spacing:-0.08px;-webkit-text-stroke-width:.22px;">13 224</span>
<div style="left:1332.5px;top:815px;width:83px;height:30px;background:linear-gradient(#2a2a2a,#000 60%);border:2px solid #8d9aa3;"></div>
<span class="t" style="left:1337.5px;top:820.0px;font-size:21px;color:#0c9a0c;font-family:'DejaVu Sans','Liberation Sans',sans-serif;letter-spacing:-0.08px;-webkit-text-stroke-width:.22px;">13 192</span>
<div style="left:1322px;top:829.5px;width:11px;height:2px;background:#0c8a0c;"></div>
<div style="left:1332.5px;top:861px;width:83px;height:30px;background:linear-gradient(#2a2a2a,#000 60%);border:2px solid #8d9aa3;"></div>
<span class="t" style="left:1337.5px;top:866.0px;font-size:21px;color:#ff1010;font-family:'DejaVu Sans','Liberation Sans',sans-serif;letter-spacing:-0.08px;-webkit-text-stroke-width:.22px;">13 182</span>
<div style="left:1322px;top:875.5px;width:11px;height:2px;background:#f40808;"></div>
<div style="left:1332.5px;top:937px;width:83px;height:30px;background:linear-gradient(#2a2a2a,#000 60%);border:2px solid #8d9aa3;"></div>
<span class="t" style="left:1337.5px;top:942.0px;font-size:21px;color:#0c9a0c;font-family:'DejaVu Sans','Liberation Sans',sans-serif;letter-spacing:-0.08px;-webkit-text-stroke-width:.22px;">13 168</span>
<div style="left:1322px;top:952px;width:11px;height:2px;background:#0c8a0c;"></div>
<div style="left:1332.5px;top:1224.5px;width:83px;height:26.5px;background:linear-gradient(#2a2a2a,#000 60%);border:2px solid #8d9aa3;"></div>
<span class="t" style="left:1337.5px;top:1227.8px;font-size:21px;color:#0c9a0c;font-family:'DejaVu Sans','Liberation Sans',sans-serif;letter-spacing:-0.08px;-webkit-text-stroke-width:.22px;">13 112</span>
<div style="left:1322px;top:1243px;width:11px;height:2px;background:#0c8a0c;"></div>
<div style="left:1332.5px;top:1249.5px;width:83px;height:27.5px;background:linear-gradient(#2a2a2a,#000 60%);border:2px solid #8d9aa3;"></div>
<span class="t" style="left:1337.5px;top:1253.3px;font-size:21px;color:#0c9a0c;font-family:'DejaVu Sans','Liberation Sans',sans-serif;letter-spacing:-0.08px;-webkit-text-stroke-width:.22px;">13 108</span>
<div style="left:1322px;top:1263px;width:11px;height:2px;background:#0c8a0c;"></div>
<div style="left:1322px;top:1293.5px;width:11px;height:2px;background:#111;"></div>
<div style="left:1332.5px;top:1277.5px;width:105px;height:33.5px;background:linear-gradient(#ffe42a,#f4c20c);border:2px solid #9aa6ad;"></div>
<span class="t" style="left:1338.5px;top:1282.5px;font-size:24px;color:#111;font-family:'DejaVu Sans','Liberation Sans',sans-serif;font-weight:700;letter-spacing:0.19px;">13 103</span>
<div style="left:1332px;top:1311px;width:56.5px;height:33px;background:linear-gradient(#ffff6e,#ffe838);border:1.500px solid #f0dc50;box-shadow:1px 1px 2px rgba(0,0,0,.2);"></div>
<span class="t" style="left:1338.5px;top:1316.2px;font-size:24px;color:#111;font-family:'DejaVu Sans','Liberation Sans',sans-serif;font-weight:700;letter-spacing:-1.23px;">14s</span>
<span class="t" style="left:1337.5px;top:1497.7px;font-size:24px;color:#111;font-family:'DejaVu Sans','Liberation Sans',sans-serif;font-weight:700;letter-spacing:-1.54px;">100</span>
<div style="left:1323px;top:1509.5px;width:9px;height:1.6px;background:#8a9caa;"></div>
<span class="t" style="left:1337.5px;top:1537.4px;font-size:22px;color:#111;font-family:'DejaVu Sans','Liberation Sans',sans-serif;letter-spacing:-1.50px;-webkit-text-stroke-width:.22px;">80</span>
<div style="left:1323px;top:1547px;width:9px;height:1.6px;background:#8a9caa;"></div>
<span class="t" style="left:1337.5px;top:1575.9px;font-size:22px;color:#111;font-family:'DejaVu Sans','Liberation Sans',sans-serif;letter-spacing:-1.50px;-webkit-text-stroke-width:.22px;">60</span>
<div style="left:1323px;top:1585.5px;width:9px;height:1.6px;background:#8a9caa;"></div>
<span class="t" style="left:1337.5px;top:1615.7px;font-size:22px;color:#111;font-family:'DejaVu Sans','Liberation Sans',sans-serif;letter-spacing:-1.50px;-webkit-text-stroke-width:.22px;">40</span>
<div style="left:1323px;top:1625.3px;width:9px;height:1.6px;background:#8a9caa;"></div>
<div style="left:1323px;top:1528px;width:5px;height:1.6px;background:#8a9caa;"></div>
<div style="left:1323px;top:1567px;width:5px;height:1.6px;background:#8a9caa;"></div>
<div style="left:1323px;top:1605px;width:5px;height:1.6px;background:#8a9caa;"></div>
<div style="left:1323px;top:1644px;width:5px;height:1.6px;background:#8a9caa;"></div>
<div style="left:1323px;top:1654px;width:5px;height:1.6px;background:#8a9caa;"></div>
<div style="left:1323px;top:1664px;width:5px;height:1.6px;background:#8a9caa;"></div>
<div style="left:1332.5px;top:1638.5px;width:83px;height:30.5px;background:linear-gradient(#2a2a2a,#000 60%);border:2px solid #8d9aa3;"></div>
<span class="t" style="left:1337.5px;top:1643.8px;font-size:21px;color:#b4b4b4;font-family:'DejaVu Sans','Liberation Sans',sans-serif;letter-spacing:-0.08px;-webkit-text-stroke-width:.22px;">25,991</span>
<div style="left:1440px;top:166px;width:1440px;height:1634px;background:#fff;"></div>
<div style="left:1440px;top:164px;width:2px;height:1636px;background:#7e93a1;"></div>
<div style="left:2878px;top:164px;width:2.5px;height:1636px;background:#6f8493;"></div>
<div style="left:1442px;top:166px;width:1388px;height:47px;background:linear-gradient(#c3e3fb,#b1d5f1 45%,#9dc4e3);"></div>
<div style="left:1440px;top:164px;width:1440px;height:1px;background:#a3b7c4;"></div>
<div style="left:1440px;top:165px;width:1440px;height:1px;background:#7e93a1;"></div>
<div style="left:1442px;top:212px;width:1388px;height:2px;background:#7e95a5;"></div>
<div style="left:2830px;top:166px;width:48px;height:48px;background:#fff;"></div>
<svg style="left:1454px;top:179px" width="90" height="24" viewBox="0 0 90 24"><g stroke="#5f7688" fill="none"><path d="M3 3l17 18M20 3L3 21" stroke-width="4"/><path d="M34 20.500h20" stroke-width="4"/><rect x="68" y="4" width="18" height="17" stroke-width="2.200"/><path d="M67 4.500h20" stroke-width="4"/></g></svg>
<svg style="left:1617px;top:173.5px" width="32" height="33.5" viewBox="0 0 40 42"><path d="M10 13.500V40.500" stroke="#b02020" stroke-width="2"/><rect x="2" y="19.500" width="16" height="15" fill="#f47878" stroke="#b02020" stroke-width="2.200"/><path d="M30 1V40.500" stroke="#1e8c1e" stroke-width="2"/><rect x="22" y="9" width="16" height="23.500" fill="#6ee66e" stroke="#1e8c1e" stroke-width="2.200"/></svg>
<div style="left:1657px;top:166px;width:2px;height:46px;background:#7d9bb4;"></div>
<div style="left:1693px;top:166px;width:2px;height:46px;background:#7d9bb4;"></div>
<div style="left:1838.5px;top:166px;width:2px;height:46px;background:#7d9bb4;"></div>
<div style="left:2021px;top:166px;width:2px;height:46px;background:#7d9bb4;"></div>
<div style="left:2164.5px;top:166px;width:2px;height:46px;background:#7d9bb4;"></div>
<svg style="left:1665.5px;top:171.500px" width="19" height="37" viewBox="0 0 19 37"><g fill="none" stroke="#737b81" stroke-width="6.800"><path d="M4.300 16.500V9.500a5.200 5.200 0 0 1 10.400 0V16.500"/><path d="M4.300 21v7a5.200 5.200 0 0 0 10.400 0V21"/></g><g fill="none" stroke="#8f979c" stroke-width="5.200"><path d="M4.300 16V9.500a5.200 5.200 0 0 1 10.400 0V16"/><path d="M4.300 21.500V28a5.200 5.200 0 0 0 10.400 0v-6.500"/></g></svg>
<span class="t" style="left:1702.0px;top:179.7px;font-size:21px;color:#111;font-family:'DejaVu Sans','Liberation Sans',sans-serif;font-weight:700;letter-spacing:-2.07px;">DXSXXXX</span>
<svg style="left:1813px;top:187px" width="12" height="7" viewBox="0 0 12 7"><path d="M0 0h12L6 7z" fill="#111"/></svg>
<span class="t" style="left:1851.0px;top:179.7px;font-size:21px;color:#111;font-family:'DejaVu Sans','Liberation Sans',sans-serif;font-weight:700;letter-spacing:-0.99px;">20 secondes</span>
<svg style="left:1999px;top:187px" width="12" height="7" viewBox="0 0 12 7"><path d="M0 0h12L6 7z" fill="#111"/></svg>
<span class="t" style="left:2033.0px;top:179.7px;font-size:21px;color:#111;font-family:'DejaVu Sans','Liberation Sans',sans-serif;letter-spacing:-0.27px;-webkit-text-stroke-width:.22px;">50 unités</span>
<svg style="left:2142px;top:187px" width="12" height="7" viewBox="0 0 12 7"><path d="M0 0h12L6 7z" fill="#111"/></svg>
<div style="left:2180px;top:178px;width:24px;height:25px;background:linear-gradient(#fff,#dfe6ea);border:1.500px solid #a9b4bb;"></div>
<span class="t" style="left:2188.0px;top:181.9px;font-size:19px;color:#888;font-family:'Liberation Serif',serif;font-weight:700;">i</span>
<span class="t" style="left:2220.0px;top:179.7px;font-size:21px;color:#b80808;font-family:'DejaVu Sans','Liberation Sans',sans-serif;font-weight:700;letter-spacing:-1.07px;">13 103 (−1,27 %)</span>
<span class="t" style="left:2417.5px;top:179.7px;font-size:21px;color:#111;font-family:'DejaVu Sans','Liberation Sans',sans-serif;font-weight:700;letter-spacing:-1.37px;">15:19:46</span>
<div style="left:2521px;top:181px;width:17.5px;height:17.5px;border-radius:50%;background:#3f9a06;"></div>
<span class="t" style="left:2548.8px;top:179.7px;font-size:21px;color:#111;font-family:'DejaVu Sans','Liberation Sans',sans-serif;letter-spacing:0.29px;-webkit-text-stroke-width:.22px;">Micro DAX Full0922</span>
<svg style="left:2835px;top:172px" width="38" height="38" viewBox="0 0 38 38"><path d="M9.800 19Q10 6 23.700 4" fill="none" stroke="#f04848" stroke-width="5.200"/><path d="M1.500 17.500h16.600L9.800 27z" fill="#ee3030"/><path d="M29.600 18Q29.500 31 14.800 32.500" fill="none" stroke="#22b422" stroke-width="5.200"/><path d="M21.500 18.500h16.400L29.600 8z" fill="#22c022"/></svg>
<div style="left:1442px;top:214px;width:61px;height:1586px;background:#c9dde9;"></div>
<div style="left:1502px;top:214px;width:2px;height:1586px;background:#9db1be;"></div>
<div style="left:1442px;top:214px;width:60px;height:27px;background:linear-gradient(#d7e6ef,#c6dae6);border-bottom:1.500px solid #9db1be;"></div>
<svg style="left:1462px;top:221px" width="20" height="10" viewBox="0 0 20 10"><path d="M0 10L10 0l10 10z" fill="#a9b3ba"/></svg>
<div style="left:1446px;top:298px;width:52px;height:51px;background:#b7c8d3;border:1.500px solid #9fb0bc;border-radius:6px;"></div>
<svg style="left:1452px;top:252px;overflow:visible" width="40" height="40"><use href="#i-pencil"/></svg>
<svg style="left:1452px;top:304px;overflow:visible" width="40" height="40"><use href="#i-arrow"/></svg>
<svg style="left:1452px;top:356px;overflow:visible" width="40" height="40"><use href="#i-mag"/></svg>
<svg style="left:1452px;top:408px;overflow:visible" width="40" height="40"><use href="#i-move"/></svg>
<svg style="left:1452px;top:460px;overflow:visible" width="40" height="40"><use href="#i-copy"/></svg>
<svg style="left:1452px;top:512px;overflow:visible" width="40" height="40"><use href="#i-tools"/></svg>
<svg style="left:1452px;top:564px;overflow:visible" width="40" height="40"><use href="#i-trash"/></svg>
<svg style="left:1452px;top:616px;overflow:visible" width="40" height="40"><use href="#i-bellc"/></svg>
<svg style="left:1452px;top:668px;overflow:visible" width="40" height="40"><use href="#i-bell"/></svg>
<svg style="left:1452px;top:720px;overflow:visible" width="40" height="40"><use href="#i-ruler"/></svg>
<svg style="left:1452px;top:772px;overflow:visible" width="40" height="40"><use href="#i-pink"/></svg>
<svg style="left:1452px;top:824px;overflow:visible" width="40" height="40"><use href="#i-rectg"/></svg>
<svg style="left:1452px;top:876px;overflow:visible" width="40" height="40"><use href="#i-rectr"/></svg>
<svg style="left:1452px;top:928px;overflow:visible" width="40" height="40"><use href="#i-rectb"/></svg>
<svg style="left:1456px;top:980px;overflow:visible" width="40" height="40"><use href="#i-textf"/></svg>
<svg style="left:1452px;top:1032px;overflow:visible" width="40" height="40"><use href="#i-chan"/></svg>
<svg style="left:1450px;top:1082px;overflow:visible" width="44" height="44"><use href="#i-lineb"/></svg>
<svg style="left:1450px;top:1134px;overflow:visible" width="44" height="44"><use href="#i-lineg"/></svg>
<svg style="left:1450px;top:1186px;overflow:visible" width="44" height="44"><use href="#i-liner"/></svg>
<svg style="left:1454px;top:1240px;overflow:visible" width="40" height="40"><use href="#i-oarrow"/></svg>
<svg style="left:1456px;top:1292px;overflow:visible" width="40" height="40"><use href="#i-node"/></svg>
<svg style="left:1450px;top:1342px;overflow:visible" width="44" height="44"><use href="#i-hlo"/></svg>
<svg style="left:1450px;top:1394px;overflow:visible" width="44" height="44"><use href="#i-hlb"/></svg>
<svg style="left:1459px;top:1448px;overflow:visible" width="40" height="40"><use href="#i-rayg"/></svg>
<svg style="left:1459px;top:1500px;overflow:visible" width="40" height="40"><use href="#i-rayr"/></svg>
<svg style="left:1450px;top:1550px;overflow:visible" width="44" height="44"><use href="#i-vline"/></svg>
<svg style="left:1452px;top:1604px;overflow:visible" width="40" height="40"><use href="#i-fib"/></svg>
<div style="left:1442px;top:1659px;width:60px;height:1px;background:#9db1be;"></div>
<div style="left:1442px;top:1660px;width:60px;height:25px;background:linear-gradient(#e8f2f7,#cfe0ea);"></div>
<svg style="left:1463px;top:1668px" width="18" height="9" viewBox="0 0 18 9"><path d="M0 0h18L9 9z" fill="#111"/></svg>
<div style="left:1442px;top:1685px;width:60px;height:2px;background:#9db1be;"></div>
<div style="left:1456px;top:1712px;width:7.5px;height:7.5px;background:#3a3a3a;border-radius:50%;"></div>
<div style="left:1468px;top:1712px;width:7.5px;height:7.5px;background:#3a3a3a;border-radius:50%;"></div>
<div style="left:1480px;top:1712px;width:7.5px;height:7.5px;background:#3a3a3a;border-radius:50%;"></div>
<svg style="left:1477px;top:1725px" width="13" height="7" viewBox="0 0 13 7"><path d="M0 0h13L6.500 7z" fill="#111"/></svg>
<div style="left:1442px;top:1747px;width:60px;height:2px;background:#9db1be;"></div>
<div style="left:1442px;top:1749px;width:60px;height:49px;background:#b6c9d5;"></div>
<svg style="left:1454px;top:1755px" width="40" height="40" viewBox="0 0 40 40"><path d="M2 34c4-30 7-30 9-12s5 18 7 2 3-8 5 4" fill="none" stroke="#555" stroke-width="1.600"/><path d="M2 4l17 18" stroke="#f01414" stroke-width="2.200"/><path d="M2 37.500h18" stroke="#28a428" stroke-width="2.400"/><path d="M18 34l2-9L32 6l6 4-12 19z" fill="#f8d038" stroke="#8a6a20" stroke-width="1.200"/><path d="M18 34l2-9 6 4z" fill="#f4dcb4" stroke="#8a6a20" stroke-width="1"/><path d="M32 6l2-3 6 4-2 3z" fill="#f0c0a0" stroke="#8a6a20" stroke-width="1"/></svg>
<span class="t" style="left:1578.8px;top:219.8px;font-size:21.5px;color:#111;font-family:'DejaVu Sans','Liberation Sans',sans-serif;letter-spacing:-0.36px;-webkit-text-stroke-width:.22px;">Portefeuille :</span>
<span class="t" style="left:1721.7px;top:219.8px;font-size:21.5px;color:#111;font-family:'DejaVu Sans','Liberation Sans',sans-serif;font-weight:700;letter-spacing:-0.94px;">13 550,72 €</span>
<span class="t" style="left:1928.6px;top:219.8px;font-size:21.5px;color:#111;font-family:'DejaVu Sans','Liberation Sans',sans-serif;letter-spacing:-0.67px;-webkit-text-stroke-width:.22px;">Gain latent :</span>
<span class="t" style="left:2078.7px;top:219.8px;font-size:21.5px;color:#111;font-family:'DejaVu Sans','Liberation Sans',sans-serif;font-weight:700;letter-spacing:-1.31px;">0,00 pts</span>
<span class="t" style="left:2256.2px;top:219.8px;font-size:21.5px;color:#111;font-family:'DejaVu Sans','Liberation Sans',sans-serif;letter-spacing:-0.21px;-webkit-text-stroke-width:.22px;">Gain Jour :</span>
<span class="t" style="left:2382.5px;top:219.8px;font-size:21.5px;color:#f0103c;font-family:'DejaVu Sans','Liberation Sans',sans-serif;font-weight:700;letter-spacing:-1.61px;">−4,00 pts</span>
<span class="t" style="left:2568.6px;top:219.8px;font-size:21.5px;color:#111;font-family:'DejaVu Sans','Liberation Sans',sans-serif;letter-spacing:0.15px;-webkit-text-stroke-width:.22px;">Trades jour :</span>
<span class="t" style="left:2714.7px;top:219.8px;font-size:21.5px;color:#50e050;font-family:'DejaVu Sans','Liberation Sans',sans-serif;font-weight:700;letter-spacing:-1.97px;">6</span>
<span class="t" style="left:2738.0px;top:219.8px;font-size:21.5px;color:#111;font-family:'DejaVu Sans','Liberation Sans',sans-serif;letter-spacing:-0.25px;-webkit-text-stroke-width:.22px;">/</span>
<span class="t" style="left:2752.5px;top:219.8px;font-size:21.5px;color:#111;font-family:'DejaVu Sans','Liberation Sans',sans-serif;font-weight:700;letter-spacing:-2.50px;">1</span>
<span class="t" style="left:2774.0px;top:219.8px;font-size:21.5px;color:#111;font-family:'DejaVu Sans','Liberation Sans',sans-serif;letter-spacing:-0.25px;-webkit-text-stroke-width:.22px;">/</span>
<span class="t" style="left:2790.0px;top:219.8px;font-size:21.5px;color:#f0103c;font-family:'DejaVu Sans','Liberation Sans',sans-serif;font-weight:700;letter-spacing:-1.97px;">2</span>
<span class="t" style="left:1794.4px;top:253.8px;font-size:21.5px;color:#111;font-family:'DejaVu Sans','Liberation Sans',sans-serif;letter-spacing:0.14px;-webkit-text-stroke-width:.22px;">Ordres :</span>
<span class="t" style="left:1893.0px;top:253.8px;font-size:21.5px;color:#111;font-family:'DejaVu Sans','Liberation Sans',sans-serif;font-weight:700;letter-spacing:-1.97px;">0</span>
<svg style="left:1912px;top:250px" width="26" height="24" viewBox="0 0 26 24"><path d="M1 1h19l5 5v17H1z" fill="#c2c2be" stroke="#b0b0ac" stroke-width="1.400"/><path d="M20 1v5h5" fill="#d8d8d4"/><path d="M5.500 5.500l14 13M19.500 5.500l-14 13" stroke="#dededa" stroke-width="5.500"/><rect x="9" y="8.500" width="7" height="7" fill="#b4b4b0"/></svg>
<span class="t" style="left:1958.0px;top:253.8px;font-size:21.5px;color:#111;font-family:'DejaVu Sans','Liberation Sans',sans-serif;letter-spacing:0.25px;-webkit-text-stroke-width:.22px;">/</span>
<span class="t" style="left:1978.8px;top:253.8px;font-size:21.5px;color:#111;font-family:'DejaVu Sans','Liberation Sans',sans-serif;font-weight:700;letter-spacing:-1.97px;">0</span>
<svg style="left:1997px;top:248px" width="30" height="28" viewBox="0 0 30 28"><g fill="none" stroke="#1a50c0"><circle cx="8.800" cy="12" r="7" stroke-width="5.400" stroke-dasharray="3.300 2.200"/><circle cx="8.800" cy="12" r="5.200" stroke-width="3"/><circle cx="22.300" cy="20.800" r="4.800" stroke-width="3.600" stroke-dasharray="2.300 1.470"/><circle cx="22.300" cy="20.800" r="3.600" stroke-width="2"/></g></svg>
<span class="t" style="left:2324.6px;top:253.8px;font-size:21.5px;color:#111;font-family:'DejaVu Sans','Liberation Sans',sans-serif;letter-spacing:-0.18px;-webkit-text-stroke-width:.22px;">Position :</span>
<span class="t" style="left:2438.7px;top:253.8px;font-size:21.5px;color:#111;font-family:'DejaVu Sans','Liberation Sans',sans-serif;font-weight:700;letter-spacing:-1.97px;">0</span>
<svg style="left:2458.5px;top:250px" width="26" height="24" viewBox="0 0 26 24"><path d="M1 1h19l5 5v17H1z" fill="#c2c2be" stroke="#b0b0ac" stroke-width="1.400"/><path d="M20 1v5h5" fill="#d8d8d4"/><path d="M5.500 5.500l14 13M19.500 5.500l-14 13" stroke="#dededa" stroke-width="5.500"/><rect x="9" y="8.500" width="7" height="7" fill="#b4b4b0"/></svg>
<span class="t" style="left:2504.0px;top:253.8px;font-size:21.5px;color:#111;font-family:'DejaVu Sans','Liberation Sans',sans-serif;letter-spacing:0.25px;-webkit-text-stroke-width:.22px;">/</span>
<span class="t" style="left:2524.6px;top:253.8px;font-size:21.5px;color:#111;font-family:'DejaVu Sans','Liberation Sans',sans-serif;font-weight:700;letter-spacing:-1.97px;">0</span>
<svg style="left:2542px;top:248px" width="30" height="28" viewBox="0 0 30 28"><g fill="none" stroke="#1a50c0"><circle cx="8.800" cy="12" r="7" stroke-width="5.400" stroke-dasharray="3.300 2.200"/><circle cx="8.800" cy="12" r="5.200" stroke-width="3"/><circle cx="22.300" cy="20.800" r="4.800" stroke-width="3.600" stroke-dasharray="2.300 1.470"/><circle cx="22.300" cy="20.800" r="3.600" stroke-width="2"/></g></svg>
<div style="left:1504px;top:284px;width:1374px;height:2px;background:#9aa9b3;"></div>
<div style="left:1664px;top:294px;width:36px;height:35px;background:linear-gradient(#fbfcfd,#dfe6ea);border:1.500px solid #98a5ae;border-radius:5px;"></div>
<svg style="left:1669px;top:298px" width="26" height="27" viewBox="0 0 26 27"><path d="M3 23.500l11-11a6 6 0 0 1 7.500-7.500l-4 4 1 3.500 3.500 1 4-4A6 6 0 0 1 18 16.500l-11 11z" transform="translate(-1 -3)" fill="#fff" stroke="#222" stroke-width="2" stroke-linejoin="round"/></svg>
<svg style="left:1664px;top:336px" width="36" height="27" viewBox="0 0 36 27"><rect x="0" y="0" width="36" height="27" rx="4" fill="#2a5ad0"/><g fill="#fff"><rect x="4" y="5" width="4" height="4"/><rect x="10" y="5" width="4" height="4"/><rect x="16" y="5" width="4" height="4"/><rect x="22" y="5" width="4" height="4"/><rect x="28" y="5" width="4" height="4"/><rect x="4" y="11" width="4" height="4"/><rect x="10" y="11" width="4" height="4"/><rect x="16" y="11" width="4" height="4"/><rect x="22" y="11" width="4" height="4"/><rect x="28" y="11" width="4" height="4"/><rect x="9" y="18" width="18" height="4"/></g></svg>
<span class="t" style="left:1742.5px;top:289.8px;font-size:21.5px;color:#111;font-family:'DejaVu Sans','Liberation Sans',sans-serif;letter-spacing:-0.70px;-webkit-text-stroke-width:.22px;">Qté</span>
<div style="left:1706.5px;top:316.5px;width:110.5px;height:42.5px;background:#fff;border:2px solid #a9b8c2;border-radius:5px;box-shadow:inset 0 2px 3px rgba(0,0,0,.12);"></div>
<span class="t" style="left:1800.0px;top:327.4px;font-size:22px;color:#111;font-family:'DejaVu Sans','Liberation Sans',sans-serif;-webkit-text-stroke-width:.22px;">1</span>
<div style="left:1826px;top:300px;width:2px;height:63px;background:#a9b5bd;"></div>
<div style="left:1904.5px;top:300px;width:2px;height:63px;background:#a9b5bd;"></div>
<div style="left:1974px;top:300px;width:2px;height:63px;background:#a9b5bd;"></div>
<div style="left:2326.5px;top:300px;width:2px;height:63px;background:#a9b5bd;"></div>
<span class="t" style="left:1836.7px;top:289.8px;font-size:21.5px;color:#111;font-family:'DejaVu Sans','Liberation Sans',sans-serif;letter-spacing:-0.59px;-webkit-text-stroke-width:.22px;">Limite</span>
<div style="left:1837.5px;top:316.5px;width:55.5px;height:55px;background:linear-gradient(#f4f7f9,#d3dde3);border:1.500px solid #9aa8b1;border-radius:5px;"></div>
<svg style="left:1842.5px;top:321.5px" width="45.5" height="45" viewBox="0 0 45 45"><path d="M3 1.500h20l8 8v33H3z" fill="#f2f5f7" stroke="#8a949c" stroke-width="1.600"/><path d="M23 1.500v8h8" fill="#dfe5ea" stroke="#8a949c" stroke-width="1.400"/><g transform="translate(6.500 3)"><path d="M0 7l8 8 8-8h-5V0h-6v7z" fill="#e03030"/></g><g transform="translate(6.500 24)"><path d="M0 8l8-8 8 8h-5v7h-6v-7z" fill="#18a018"/></g><rect x="21" y="22" width="22" height="10" fill="#eef1f3" stroke="#8a949c" stroke-width="1.600"/><rect x="21" y="32" width="22" height="10" fill="#c9d0d6" stroke="#8a949c" stroke-width="1.600"/></svg>
<span class="t" style="left:1918.3px;top:289.8px;font-size:21.5px;color:#111;font-family:'DejaVu Sans','Liberation Sans',sans-serif;letter-spacing:-0.35px;-webkit-text-stroke-width:.22px;">Stop</span>
<div style="left:1911.5px;top:316.5px;width:56px;height:55px;background:linear-gradient(#f4f7f9,#d3dde3);border:1.500px solid #9aa8b1;border-radius:5px;"></div>
<svg style="left:1916.5px;top:321.5px" width="46" height="45" viewBox="0 0 45 45"><path d="M3 1.500h20l8 8v33H3z" fill="#f2f5f7" stroke="#8a949c" stroke-width="1.600"/><path d="M23 1.500v8h8" fill="#dfe5ea" stroke="#8a949c" stroke-width="1.400"/><g transform="translate(6.500 3)"><path d="M0 8l8-8 8 8h-5v7h-6v-7z" fill="#18a018"/></g><g transform="translate(6.500 24)"><path d="M0 7l8 8 8-8h-5V0h-6v7z" fill="#e03030"/></g><rect x="21" y="22" width="22" height="10" fill="#eef1f3" stroke="#8a949c" stroke-width="1.600"/><rect x="21" y="32" width="22" height="10" fill="#c9d0d6" stroke="#8a949c" stroke-width="1.600"/></svg>
<span class="t" style="left:2010.2px;top:289.8px;font-size:21.5px;color:#111;font-family:'DejaVu Sans','Liberation Sans',sans-serif;letter-spacing:-0.11px;-webkit-text-stroke-width:.22px;">Vente MKT</span>
<div style="left:1982px;top:316px;width:165.5px;height:57px;background:linear-gradient(#ee5a5e,#e4474c 55%,#d83f44);border-radius:5px;border:1px solid #c83a3e;"></div>
<span class="t" style="left:1988.0px;top:323.1px;font-size:46px;color:#fff;font-family:'DejaVu Sans','Liberation Sans',sans-serif;letter-spacing:-2.27px;-webkit-text-stroke-width:.22px;text-shadow:-1px -1px 1px rgba(120,0,0,.35);">13</span>
<span class="t" style="left:2058.5px;top:323.1px;font-size:46px;color:#fff;font-family:'DejaVu Sans','Liberation Sans',sans-serif;letter-spacing:-1.94px;-webkit-text-stroke-width:.22px;text-shadow:-1px -1px 1px rgba(120,0,0,.35);">101</span>
<span class="t" style="left:2181.8px;top:289.8px;font-size:21.5px;color:#111;font-family:'DejaVu Sans','Liberation Sans',sans-serif;letter-spacing:0.13px;-webkit-text-stroke-width:.22px;">Achat MKT</span>
<div style="left:2154px;top:316px;width:165.5px;height:57px;background:linear-gradient(#3cc444,#2fb037 55%,#27a42f);border-radius:5px;border:1px solid #22962a;"></div>
<span class="t" style="left:2160.0px;top:323.1px;font-size:46px;color:#fff;font-family:'DejaVu Sans','Liberation Sans',sans-serif;letter-spacing:-2.27px;-webkit-text-stroke-width:.22px;text-shadow:-1px -1px 1px rgba(120,0,0,.35);">13</span>
<span class="t" style="left:2229.5px;top:323.1px;font-size:46px;color:#fff;font-family:'DejaVu Sans','Liberation Sans',sans-serif;letter-spacing:-1.44px;-webkit-text-stroke-width:.22px;text-shadow:-1px -1px 1px rgba(120,0,0,.35);">104</span>
<div style="left:2345.5px;top:300px;width:24px;height:24px;background:#fff;border:2px solid #a9b8c2;border-radius:5px;"></div>
<span class="t" style="left:2377.5px;top:301.8px;font-size:21.5px;color:#111;font-family:'DejaVu Sans','Liberation Sans',sans-serif;letter-spacing:0.36px;-webkit-text-stroke-width:.22px;">T</span>
<div style="left:2400px;top:288.5px;width:27px;height:42px;background:#fff;border:2px solid #a9b8c2;border-radius:5px;"></div>
<span class="t" style="left:2405.0px;top:300.8px;font-size:21.5px;color:#a9b1b7;font-family:'DejaVu Sans','Liberation Sans',sans-serif;-webkit-text-stroke-width:.22px;">3</span>
<span class="t" style="left:2433.0px;top:300.8px;font-size:21.5px;color:#111;font-family:'DejaVu Sans','Liberation Sans',sans-serif;letter-spacing:-0.76px;-webkit-text-stroke-width:.22px;">pts</span>
<div style="left:2345.5px;top:345.5px;width:24px;height:24px;background:#fff;border:2px solid #a9b8c2;border-radius:5px;"></div>
<span class="t" style="left:2377.5px;top:347.3px;font-size:21.5px;color:#111;font-family:'DejaVu Sans','Liberation Sans',sans-serif;letter-spacing:-0.16px;-webkit-text-stroke-width:.22px;">S</span>
<div style="left:2400px;top:334.5px;width:41px;height:42px;background:#fff;border:2px solid #a9b8c2;border-radius:5px;"></div>
<span class="t" style="left:2405.0px;top:346.3px;font-size:21.5px;color:#a9b1b7;font-family:'DejaVu Sans','Liberation Sans',sans-serif;-webkit-text-stroke-width:.22px;">30</span>
<span class="t" style="left:2447.0px;top:346.3px;font-size:21.5px;color:#111;font-family:'DejaVu Sans','Liberation Sans',sans-serif;letter-spacing:-0.76px;-webkit-text-stroke-width:.22px;">pts</span>
<div style="left:2487.5px;top:286px;width:5px;height:95px;background:#a9b8c2;"></div>
<span class="t" style="left:2518.3px;top:289.8px;font-size:21.5px;color:#111;font-family:'DejaVu Sans','Liberation Sans',sans-serif;letter-spacing:-0.42px;-webkit-text-stroke-width:.22px;">Perte €</span>
<div style="left:2500.5px;top:318.5px;width:110.5px;height:42.5px;background:#fff;border:2px solid #a9b8c2;border-radius:5px;box-shadow:inset 0 2px 3px rgba(0,0,0,.12);"></div>
<span class="t" style="left:2562.0px;top:328.9px;font-size:22px;color:#111;font-family:'DejaVu Sans','Liberation Sans',sans-serif;letter-spacing:-0.83px;-webkit-text-stroke-width:.22px;">100</span>
<span class="t" style="left:2622.0px;top:290.8px;font-size:21.5px;color:#111;font-family:'DejaVu Sans','Liberation Sans',sans-serif;letter-spacing:-0.11px;-webkit-text-stroke-width:.22px;">Qté Auto</span>
<div style="left:2640px;top:316.5px;width:55px;height:55px;background:linear-gradient(#f4f7f9,#d3dde3);border:1.500px solid #9aa8b1;border-radius:5px;"></div>
<svg style="left:2645px;top:321.5px" width="45" height="45" viewBox="0 0 45 45"><path d="M3 1.500h20l8 8v33H3z" fill="#f2f5f7" stroke="#8a949c" stroke-width="1.600"/><path d="M23 1.500v8h8" fill="#dfe5ea" stroke="#8a949c" stroke-width="1.400"/><g transform="translate(6.500 3)"><path d="M0 7l8 8 8-8h-5V0h-6v7z" fill="#e03030"/></g><g transform="translate(6.500 24)"><path d="M0 8l8-8 8 8h-5v7h-6v-7z" fill="#18a018"/></g><rect x="21" y="22" width="22" height="17" fill="#eef1f3" stroke="#8a949c" stroke-width="1.600"/><path d="M27 26.500l9 8M36 26.500l-9 8" stroke="#8a949c" stroke-width="2.400"/><path d="M22 42h21" stroke="#8a949c" stroke-width="3"/></svg>
<div style="left:2493px;top:380px;width:385px;height:1.5px;background:#c4d3dc;"></div>
<svg style="left:1504px;top:416px" width="1258" height="1384" viewBox="1504 416 1258 1384" shape-rendering="auto"><defs><linearGradient id="bgR" x1="0" y1="0" x2="0" y2="1"><stop offset="0" stop-color="#303030"/><stop offset=".35" stop-color="#262626"/><stop offset=".7" stop-color="#151515"/><stop offset="1" stop-color="#070707"/></linearGradient><linearGradient id="crR" x1="0" x2="1"><stop offset="0" stop-color="#f68d8d"/><stop offset="1" stop-color="#d65a5a"/></linearGradient><linearGradient id="cgR" x1="0" x2="1"><stop offset="0" stop-color="#72ea72"/><stop offset="1" stop-color="#38c038"/></linearGradient></defs><rect x="1504" y="416" width="1258" height="1072" fill="url(#bgR)"/><rect x="1504" y="1488" width="1258" height="312" fill="#050505"/><path d="M1566.7 416V1800M1728.8 416V1800M1890.9 416V1800M2053.0 416V1800M2215.1 416V1800M2377.2 416V1800M2539.3 416V1800M2701.4 416V1800M1504 463.4H2762M1504 545.5H2762M1504 627.6H2762M1504 709.7H2762M1504 791.8H2762M1504 873.9H2762M1504 956.0H2762M1504 1038.1H2762M1504 1120.2H2762M1504 1202.3H2762M1504 1284.4H2762M1504 1366.5H2762" stroke="rgba(112,122,142,.32)" stroke-width="1.600" stroke-dasharray="8 8" fill="none"/><rect x="1504" y="1490" width="1258" height="310" fill="#040404"/><path d="M1566.7 1490V1800M1728.8 1490V1800M1890.9 1490V1800M2053.0 1490V1800M2215.1 1490V1800M2377.2 1490V1800M2539.3 1490V1800M2701.4 1490V1800M1504 1549H2762M1504 1587.5H2762M1504 1626H2762M1504 1665H2762" stroke="rgba(112,122,142,.3)" stroke-width="1.600" stroke-dasharray="8 8" fill="none"/><path d="M1504 1510.500H2762" stroke="#2c2c34" stroke-width="2"/><text x="2341" y="425.500" font-family="DejaVu Sans,sans-serif" font-size="37.500" fill="#4a505a" textLength="398" lengthAdjust="spacingAndGlyphs">Micro DAX Full0922</text><path d="M1526.8 612.4V777.8" stroke="#fff" stroke-width="2.200"/><rect x="1510.8" y="613.4" width="32" height="114.6" fill="url(#crR)" stroke="#fff" stroke-width="2"/><path d="M1566.7 662.3V777.8" stroke="#fff" stroke-width="2.200"/><rect x="1550.7" y="745.1" width="32" height="15.2" fill="url(#cgR)" stroke="#fff" stroke-width="2"/><path d="M1608.7 678.4V777.8" stroke="#fff" stroke-width="2.200"/><rect x="1592.7" y="679.4" width="32" height="48.6" fill="url(#cgR)" stroke="#fff" stroke-width="2"/><path d="M1648.9 662.6V729.0" stroke="#fff" stroke-width="2.200"/><rect x="1632.9" y="663.6" width="32" height="64.4" fill="url(#crR)" stroke="#fff" stroke-width="2"/><path d="M1688.8 580.0V761.3" stroke="#fff" stroke-width="2.200"/><rect x="1672.8" y="613.4" width="32" height="146.9" fill="url(#cgR)" stroke="#fff" stroke-width="2"/><path d="M1729.0 513.7V745.1" stroke="#fff" stroke-width="2.200"/><rect x="1713.0" y="565.6" width="32" height="178.5" fill="url(#crR)" stroke="#fff" stroke-width="2"/><path d="M1768.9 662.3V843.1" stroke="#fff" stroke-width="2.200"/><rect x="1752.9" y="695.6" width="32" height="146.5" fill="url(#crR)" stroke="#fff" stroke-width="2"/><path d="M1810.9 775.7V975.2" stroke="#fff" stroke-width="2.200"/><rect x="1794.9" y="843.1" width="32" height="113.2" fill="url(#crR)" stroke="#fff" stroke-width="2"/><path d="M1850.9 924.0V1137.8" stroke="#fff" stroke-width="2.200"/><rect x="1834.9" y="957.6" width="32" height="114.2" fill="url(#crR)" stroke="#fff" stroke-width="2"/><path d="M1891.2 990.3V1156.0" stroke="#fff" stroke-width="2.200"/><rect x="1875.2" y="1023.6" width="32" height="64.7" fill="url(#crR)" stroke="#fff" stroke-width="2"/><path d="M1930.7 1006.0V1089.6" stroke="#fff" stroke-width="2.200"/><rect x="1914.7" y="1023.6" width="32" height="48.2" fill="url(#cgR)" stroke="#fff" stroke-width="2"/><path d="M1973.0 990.3V1105.5" stroke="#fff" stroke-width="2.200"/><rect x="1957.0" y="1023.6" width="32" height="80.9" fill="url(#crR)" stroke="#fff" stroke-width="2"/><path d="M2012.9 1006.0V1121.3" stroke="#fff" stroke-width="2.200"/><rect x="1996.9" y="1090.0" width="32" height="30.3" fill="url(#crR)" stroke="#fff" stroke-width="2"/><path d="M2052.8 1072.0V1269.5" stroke="#fff" stroke-width="2.200"/><rect x="2036.8" y="1090.0" width="32" height="146.2" fill="url(#crR)" stroke="#fff" stroke-width="2"/><path d="M2093.0 1154.3V1269.5" stroke="#fff" stroke-width="2.200"/><path d="M2076.3 1202.8H2109.7" stroke="#fff" stroke-width="2.200"/><path d="M2135.0 1186.3V1335.5" stroke="#fff" stroke-width="2.200"/><rect x="2119.0" y="1219.6" width="32" height="80.9" fill="url(#crR)" stroke="#fff" stroke-width="2"/><path d="M2174.9 1318.7V1364.0" stroke="#fff" stroke-width="2.200"/><rect x="2158.9" y="1319.7" width="32" height="30.6" fill="url(#crR)" stroke="#fff" stroke-width="2"/><path d="M1504 503.400L1603.200 547L1713.200 574.600L1809.500 610L1892 685.600L1933.300 715.600L2012.400 763.700L2175.700 910.900" fill="none" stroke="#cc6a64" stroke-width="2.200" opacity=".92"/><path d="M1504 1170.2H2740" stroke="#e88080" stroke-width="1.6" stroke-dasharray="12 6"/><path d="M1504 1169.4H2762" stroke="#078a07" stroke-width="3.6" stroke-dasharray="42 18"/><path d="M1504 1229.9H2762" stroke="#078a07" stroke-width="3.6" stroke-dasharray="42 18"/><path d="M1806.2 984h9v12h6.500l-11 13-11-13h6.500z" fill="#f06468"/><path d="M1966.7 1120.8L1979.7 1133.8M1979.7 1120.8L1966.7 1133.8" stroke="#3cc84c" stroke-width="7.500" stroke-linecap="square"/><path d="M1825 875l9.500-6.500v13z" fill="#f47878"/><path d="M1959.6 1023l-9.500-7v14z" fill="#58dc58"/><path d="M1504 545.4H2762" stroke="#fa0404" stroke-width="4"/><path d="M1504 1365.6H2762" stroke="#fa0404" stroke-width="4"/><rect x="1504" y="1487" width="1258" height="2.600" fill="#c3d2da"/><path d="M1504 1569H2762" stroke="#3c3cd8" stroke-width="2.4"/><path d="M1504 1607H2762" stroke="#3c3cd8" stroke-width="2.4"/><path d="M1504 1645H2762" stroke="#3c3cd8" stroke-width="2.4"/><clipPath id="rcR"><rect x="1504" y="1646" width="1258" height="60"/></clipPath><path d="M1503.6 1633.7L1526.8 1636.7L1567 1638.5L1608.6 1630.8L1648.8 1634.6L1690.4 1622.7L1729 1631L1797.5 1641.2L1836.2 1646L1895.7 1648.6L1931.4 1640.6L1976 1644.2L2047.5 1650.4L2092 1646.5L2130.8 1652.5L2175.4 1654.6V1640H1503.6z" fill="#063c06" clip-path="url(#rcR)"/><path d="M1503.6 1633.7L1526.8 1636.7L1567 1638.5L1608.6 1630.8L1648.8 1634.6L1690.4 1622.7L1729 1631L1797.5 1641.2L1836.2 1646L1895.7 1648.6L1931.4 1640.6L1976 1644.2L2047.5 1650.4L2092 1646.5L2130.8 1652.5L2175.4 1654.6" fill="none" stroke="#b9b9b9" stroke-width="2.200"/></svg>
<div style="left:1504px;top:381px;width:1258px;height:35px;background:linear-gradient(#e4eef4,#d7e4ec);border-bottom:2px solid #9db1be;"></div>
<div style="left:1541px;top:383px;width:2px;height:31px;background:#a9bac5;"></div>
<div style="left:1580.5px;top:383px;width:2px;height:31px;background:#a9bac5;"></div>
<div style="left:1663px;top:383px;width:2px;height:31px;background:#a9bac5;"></div>
<div style="left:1813px;top:383px;width:2px;height:31px;background:#a9bac5;"></div>
<div style="left:2006.5px;top:383px;width:2px;height:31px;background:#a9bac5;"></div>
<div style="left:2220.5px;top:383px;width:2px;height:31px;background:#a9bac5;"></div>
<div style="left:2420.5px;top:383px;width:2px;height:31px;background:#a9bac5;"></div>
<div style="left:2638px;top:383px;width:2px;height:31px;background:#a9bac5;"></div>
<div style="left:1510px;top:386px;width:26.5px;height:24px;background:linear-gradient(#fff,#e4ebef);border:1.500px solid #a9b6be;"></div>
<svg style="left:1516px;top:391px" width="14" height="14" viewBox="0 0 14 14"><path d="M0 5l7 7 7-7h-4.500V0h-5v5z" fill="#e02828"/></svg>
<div style="left:1550px;top:386px;width:26.5px;height:24px;background:linear-gradient(#fff,#e4ebef);border:1.500px solid #a9b6be;"></div>
<svg style="left:1556px;top:391px" width="14" height="14" viewBox="0 0 14 14"><path d="M0 7l7-7 7 7h-4.500v5h-5V7z" fill="#18a018"/></svg>
<div style="left:1589.4px;top:387px;width:10px;height:22px;background:#3fc24a;"></div>
<div style="left:1599.4px;top:387px;width:10.5px;height:22px;background:#e05a5e;"></div>
<span class="t" style="left:1616.9px;top:387.8px;font-size:21.5px;color:#111;font-family:'DejaVu Sans','Liberation Sans',sans-serif;letter-spacing:-0.16px;-webkit-text-stroke-width:.22px;">Prix</span>
<svg style="left:1671px;top:385px" width="25" height="27" viewBox="0 0 25 27"><path d="M1.500 10.500h12v14h-12z" fill="#e4ecf8" stroke="#b4c8ec" stroke-width="1.400"/><path d="M6 6h12v14H6z" fill="#eef2fa" stroke="#6a8cdc" stroke-width="1.600"/><path d="M11 1.500h8l4.500 4.500v11H11z" fill="#fff" stroke="#2450c8" stroke-width="2"/><path d="M18.500 1.500v5h5" fill="none" stroke="#2450c8" stroke-width="1.600"/></svg>
<span class="t" style="left:1702.0px;top:387.8px;font-size:21.5px;color:#111;font-family:'DejaVu Sans','Liberation Sans',sans-serif;letter-spacing:-0.22px;-webkit-text-stroke-width:.22px;">Actualités</span>
<div style="left:1821.8px;top:387px;width:20px;height:22px;background:#c2c2c2;"></div>
<span class="t" style="left:1848.3px;top:387.8px;font-size:21.5px;color:#111;font-family:'DejaVu Sans','Liberation Sans',sans-serif;letter-spacing:-0.22px;-webkit-text-stroke-width:.22px;">Clôture (J, Pré)</span>
<div style="left:2015.9px;top:387px;width:20px;height:22px;background:#4fd054;"></div>
<span class="t" style="left:2042.6px;top:387.8px;font-size:21.5px;color:#111;font-family:'DejaVu Sans','Liberation Sans',sans-serif;letter-spacing:-0.43px;-webkit-text-stroke-width:.22px;">Plus Haut (J, Pré)</span>
<div style="left:2229.8px;top:387px;width:20px;height:22px;background:#e06064;"></div>
<span class="t" style="left:2256.9px;top:387.8px;font-size:21.5px;color:#111;font-family:'DejaVu Sans','Liberation Sans',sans-serif;letter-spacing:-0.56px;-webkit-text-stroke-width:.22px;">Plus Bas (J, Pré)</span>
<div style="left:2429.8px;top:387px;width:7px;height:22px;background:#f01010;"></div>
<div style="left:2436.8px;top:387px;width:6px;height:22px;background:#bdbdbd;"></div>
<div style="left:2442.8px;top:387px;width:7px;height:22px;background:#108a10;"></div>
<div style="left:2648px;top:387px;width:7px;height:22px;background:#f01010;"></div>
<div style="left:2655px;top:387px;width:6px;height:22px;background:#bdbdbd;"></div>
<div style="left:2661px;top:387px;width:7px;height:22px;background:#108a10;"></div>
<span class="t" style="left:2456.9px;top:387.8px;font-size:21.5px;color:#111;font-family:'DejaVu Sans','Liberation Sans',sans-serif;letter-spacing:-0.16px;-webkit-text-stroke-width:.22px;">Points pivots (M)</span>
<span class="t" style="left:2675.0px;top:387.8px;font-size:21.5px;color:#111;font-family:'DejaVu Sans','Liberation Sans',sans-serif;letter-spacing:-0.45px;-webkit-text-stroke-width:.22px;">Points pi</span>
<span class="t" style="left:1508.5px;top:1465.3px;font-size:21.5px;color:#c6c6c6;font-family:'DejaVu Sans','Liberation Sans',sans-serif;letter-spacing:-0.11px;-webkit-text-stroke:.5px #c6c6c6;text-shadow:1.500px 1.500px 0 #5a5a5a;">ProRealTime.com – Temps Réel</span>
<div style="left:1504px;top:1490px;width:122.5px;height:33.5px;background:#dfeaf1;border-right:2px solid #a9bac5;border-bottom:2px solid #a9bac5;"></div>
<div style="left:1510px;top:1496.5px;width:20px;height:19.5px;background:#c2c2c2;"></div>
<span class="t" style="left:1537.0px;top:1495.8px;font-size:21.5px;color:#111;font-family:'DejaVu Sans','Liberation Sans',sans-serif;letter-spacing:-0.86px;-webkit-text-stroke-width:.22px;">RSI (14)</span>
<span class="t" style="left:1509.3px;top:519.3px;font-size:21.5px;color:#fa0404;font-family:'DejaVu Sans','Liberation Sans',sans-serif;letter-spacing:-0.21px;-webkit-text-stroke:.55px #fa0404;">13 150</span>
<span class="t" style="left:1509.3px;top:1339.3px;font-size:21.5px;color:#fa0404;font-family:'DejaVu Sans','Liberation Sans',sans-serif;letter-spacing:-0.21px;-webkit-text-stroke:.55px #fa0404;">13 100</span>
<span class="t" style="left:2714.4px;top:1207.5px;font-size:20px;color:#0c8a0c;font-family:'DejaVu Sans','Liberation Sans',sans-serif;font-weight:700;letter-spacing:-1.43px;">S1 J</span>
<span class="t" style="left:2692.0px;top:1146.8px;font-size:20px;color:#0c8a0c;font-family:'DejaVu Sans','Liberation Sans',sans-serif;font-weight:700;letter-spacing:-1.09px;">S1 4h</span>
<span class="t" style="left:2643.0px;top:1146.8px;font-size:20px;color:#e87878;font-family:'DejaVu Sans','Liberation Sans',sans-serif;font-weight:700;letter-spacing:-1.55px;">Bas (J, Pré)</span>
<div style="left:2762px;top:381px;width:1.5px;height:1419px;background:#a9bcc8;"></div>
<div style="left:2762px;top:1487px;width:116px;height:1.5px;background:#b9c9d3;"></div>
<span class="t" style="left:2777.5px;top:453.5px;font-size:21px;color:#111;font-family:'DejaVu Sans','Liberation Sans',sans-serif;letter-spacing:-0.08px;-webkit-text-stroke:.3px #111;">13 155</span>
<div style="left:2763px;top:462.5px;width:8px;height:1.6px;background:#8a9caa;"></div>
<span class="t" style="left:2777.5px;top:617.7px;font-size:21px;color:#111;font-family:'DejaVu Sans','Liberation Sans',sans-serif;letter-spacing:-0.08px;-webkit-text-stroke:.3px #111;">13 145</span>
<div style="left:2763px;top:626.7px;width:8px;height:1.6px;background:#8a9caa;"></div>
<span class="t" style="left:2777.5px;top:699.8px;font-size:21px;color:#111;font-family:'DejaVu Sans','Liberation Sans',sans-serif;letter-spacing:-0.08px;-webkit-text-stroke:.3px #111;">13 140</span>
<div style="left:2763px;top:708.8px;width:8px;height:1.6px;background:#8a9caa;"></div>
<span class="t" style="left:2777.5px;top:781.9px;font-size:21px;color:#111;font-family:'DejaVu Sans','Liberation Sans',sans-serif;letter-spacing:-0.08px;-webkit-text-stroke:.3px #111;">13 135</span>
<div style="left:2763px;top:790.9px;width:8px;height:1.6px;background:#8a9caa;"></div>
<span class="t" style="left:2777.5px;top:864.0px;font-size:21px;color:#111;font-family:'DejaVu Sans','Liberation Sans',sans-serif;letter-spacing:-0.08px;-webkit-text-stroke:.3px #111;">13 130</span>
<div style="left:2763px;top:873px;width:8px;height:1.6px;background:#8a9caa;"></div>
<span class="t" style="left:2777.5px;top:946.1px;font-size:21px;color:#111;font-family:'DejaVu Sans','Liberation Sans',sans-serif;letter-spacing:-0.08px;-webkit-text-stroke:.3px #111;">13 125</span>
<div style="left:2763px;top:955.1px;width:8px;height:1.6px;background:#8a9caa;"></div>
<span class="t" style="left:2777.5px;top:1028.2px;font-size:21px;color:#111;font-family:'DejaVu Sans','Liberation Sans',sans-serif;letter-spacing:-0.08px;-webkit-text-stroke:.3px #111;">13 120</span>
<div style="left:2763px;top:1037.2px;width:8px;height:1.6px;background:#8a9caa;"></div>
<span class="t" style="left:2777.5px;top:1110.3px;font-size:21px;color:#111;font-family:'DejaVu Sans','Liberation Sans',sans-serif;letter-spacing:-0.08px;-webkit-text-stroke:.3px #111;">13 115</span>
<div style="left:2763px;top:1119.3px;width:8px;height:1.6px;background:#8a9caa;"></div>
<span class="t" style="left:2777.5px;top:1192.4px;font-size:21px;color:#111;font-family:'DejaVu Sans','Liberation Sans',sans-serif;letter-spacing:-0.08px;-webkit-text-stroke:.3px #111;">13 110</span>
<div style="left:2763px;top:1201.4px;width:8px;height:1.6px;background:#8a9caa;"></div>
<span class="t" style="left:2777.5px;top:1274.5px;font-size:21px;color:#111;font-family:'DejaVu Sans','Liberation Sans',sans-serif;letter-spacing:-0.08px;-webkit-text-stroke:.3px #111;">13 105</span>
<div style="left:2763px;top:1283.5px;width:8px;height:1.6px;background:#8a9caa;"></div>
<span class="t" style="left:2777.5px;top:1356.6px;font-size:21px;color:#111;font-family:'DejaVu Sans','Liberation Sans',sans-serif;letter-spacing:-0.08px;-webkit-text-stroke:.3px #111;">13 100</span>
<div style="left:2763px;top:1365.6px;width:8px;height:1.6px;background:#8a9caa;"></div>
<span class="t" style="left:2777.5px;top:387.0px;font-size:21px;color:#111;font-family:'DejaVu Sans','Liberation Sans',sans-serif;letter-spacing:-0.08px;-webkit-text-stroke:.3px #111;">13 160</span>
<div style="left:2763px;top:396px;width:8px;height:1.6px;background:#8a9caa;"></div>
<span class="t" style="left:2777.5px;top:534.7px;font-size:22.6px;color:#111;font-family:'DejaVu Sans','Liberation Sans',sans-serif;font-weight:700;letter-spacing:-0.25px;">13 150</span>
<div style="left:2763px;top:544.6px;width:8px;height:1.6px;background:#8a9caa;"></div>
<div style="left:2772.5px;top:1155.5px;width:83px;height:29.5px;background:linear-gradient(#2a2a2a,#000 60%);border:2px solid #8d9aa3;"></div>
<span class="t" style="left:2777.5px;top:1160.3px;font-size:21px;color:#0c9a0c;font-family:'DejaVu Sans','Liberation Sans',sans-serif;letter-spacing:-0.08px;-webkit-text-stroke-width:.22px;">13 112</span>
<div style="left:2762px;top:1169px;width:11px;height:2px;background:#0c8a0c;"></div>
<div style="left:2772.5px;top:1215.5px;width:83px;height:29.5px;background:linear-gradient(#2a2a2a,#000 60%);border:2px solid #8d9aa3;"></div>
<span class="t" style="left:2777.5px;top:1220.3px;font-size:21px;color:#0c9a0c;font-family:'DejaVu Sans','Liberation Sans',sans-serif;letter-spacing:-0.08px;-webkit-text-stroke-width:.22px;">13 108</span>
<div style="left:2762px;top:1229px;width:11px;height:2px;background:#0c8a0c;"></div>
<div style="left:2762px;top:1349px;width:11px;height:2px;background:#111;"></div>
<div style="left:2772.5px;top:1333px;width:105px;height:34.5px;background:linear-gradient(#ffe42a,#f4c20c);border:2px solid #9aa6ad;"></div>
<span class="t" style="left:2778.5px;top:1338.5px;font-size:24px;color:#111;font-family:'DejaVu Sans','Liberation Sans',sans-serif;font-weight:700;letter-spacing:0.19px;">13 101</span>
<div style="left:2772px;top:1367.5px;width:56.5px;height:33px;background:linear-gradient(#ffff6e,#ffe838);border:1.500px solid #f0dc50;box-shadow:1px 1px 2px rgba(0,0,0,.2);"></div>
<span class="t" style="left:2778.5px;top:1372.7px;font-size:24px;color:#111;font-family:'DejaVu Sans','Liberation Sans',sans-serif;font-weight:700;letter-spacing:-1.23px;">14s</span>
<span class="t" style="left:2777.5px;top:1497.7px;font-size:24px;color:#111;font-family:'DejaVu Sans','Liberation Sans',sans-serif;font-weight:700;letter-spacing:-1.54px;">100</span>
<div style="left:2763px;top:1509.5px;width:9px;height:1.6px;background:#8a9caa;"></div>
<span class="t" style="left:2777.5px;top:1537.4px;font-size:22px;color:#111;font-family:'DejaVu Sans','Liberation Sans',sans-serif;letter-spacing:-1.50px;-webkit-text-stroke-width:.22px;">80</span>
<div style="left:2763px;top:1547px;width:9px;height:1.6px;background:#8a9caa;"></div>
<span class="t" style="left:2777.5px;top:1575.9px;font-size:22px;color:#111;font-family:'DejaVu Sans','Liberation Sans',sans-serif;letter-spacing:-1.50px;-webkit-text-stroke-width:.22px;">60</span>
<div style="left:2763px;top:1585.5px;width:9px;height:1.6px;background:#8a9caa;"></div>
<span class="t" style="left:2777.5px;top:1615.7px;font-size:22px;color:#111;font-family:'DejaVu Sans','Liberation Sans',sans-serif;letter-spacing:-1.50px;-webkit-text-stroke-width:.22px;">40</span>
<div style="left:2763px;top:1625.3px;width:9px;height:1.6px;background:#8a9caa;"></div>
<div style="left:2763px;top:1528px;width:5px;height:1.6px;background:#8a9caa;"></div>
<div style="left:2763px;top:1567px;width:5px;height:1.6px;background:#8a9caa;"></div>
<div style="left:2763px;top:1605px;width:5px;height:1.6px;background:#8a9caa;"></div>
<div style="left:2763px;top:1644px;width:5px;height:1.6px;background:#8a9caa;"></div>
<div style="left:2763px;top:1654px;width:5px;height:1.6px;background:#8a9caa;"></div>
<div style="left:2763px;top:1664px;width:5px;height:1.6px;background:#8a9caa;"></div>
<div style="left:2772.5px;top:1638.5px;width:83px;height:30.5px;background:linear-gradient(#2a2a2a,#000 60%);border:2px solid #8d9aa3;"></div>
<span class="t" style="left:2777.5px;top:1643.8px;font-size:21px;color:#b4b4b4;font-family:'DejaVu Sans','Liberation Sans',sans-serif;letter-spacing:-0.08px;-webkit-text-stroke-width:.22px;">25,269</span>
<div style="left:1918px;top:1582.5px;width:260px;height:51.5px;background:#9d9aab;border-radius:8px;"></div>
<svg style="left:2030px;top:1632px" width="36" height="19" viewBox="0 0 36 19"><path d="M0 0h36L21 16.500q-3 3-6 0z" fill="#9d9aab"/></svg>
<span class="t" style="left:1945.5px;top:1593.8px;font-size:28px;color:#111;font-family:'Liberation Sans','DejaVu Sans',sans-serif;letter-spacing:0.38px;">Capture dʹécran</span>
<div style="left:64px;top:1712px;width:22px;height:38px;background:#f4f4f4;"></div>
<div style="left:64px;top:1749px;width:29px;height:49px;background:#c3d6e2;border-right:2px solid #9db1be;"></div>
<div style="left:64px;top:1747px;width:22px;height:2px;background:#9db1be;"></div>
<svg style="left:70px;top:1772px" width="13" height="7" viewBox="0 0 13 7"><path d="M0 0h13L6.500 7z" fill="#111"/></svg>
<div style="left:93px;top:1786px;width:1229px;height:12px;background:#e9e9e9;"></div>
<div style="left:104px;top:1789px;width:38px;height:4px;background:#28c028;"></div>
<div style="left:104px;top:1793px;width:38px;height:2px;background:#2040d0;"></div>
<div style="left:110px;top:1790px;width:4px;height:3px;background:#e03030;"></div>
<div style="left:121px;top:1790px;width:4px;height:3px;background:#e03030;"></div>
<div style="left:130px;top:1790px;width:4px;height:3px;background:#e03030;"></div>
<div style="left:280px;top:1786px;width:2px;height:12px;background:#a9b5bd;"></div>
<div style="left:358px;top:1790px;width:16px;height:2px;background:#18186a;"></div>
<div style="left:378px;top:1790px;width:16px;height:2px;background:#777;"></div>
<div style="left:312px;top:1788px;width:42px;height:10px;background:#1f7ad0;"></div>
<div style="left:510px;top:1786px;width:812px;height:12px;background:#c3d8e6;"></div>
<div style="left:1504px;top:1786px;width:1258px;height:12px;background:#c3d8e6;"></div>
<div style="left:1538px;top:1786px;width:440px;height:12px;background:#e9e9e9;"></div>
<div style="left:1752px;top:1788px;width:42px;height:10px;background:#1f7ad0;"></div>
<div style="left:2764px;top:1700px;width:114px;height:48px;background:linear-gradient(#fff,#e8e8e8);"></div>
<div style="left:2797px;top:1748px;width:81px;height:50px;background:#c5d9e6;border-top:1px solid #a9bcc8;"></div>
<div style="left:2762px;top:1786px;width:118px;height:12px;background:#c3d8e6;"></div>
<div style="left:0px;top:1798px;width:2880px;height:2px;background:#8398a6;"></div>
<svg style="left:2787px;top:1758px" width="34" height="34" viewBox="0 0 34 34"><circle cx="12" cy="11" r="9" fill="#fff" stroke="#111" stroke-width="2.400"/><path d="M7 11h10M12 6v10" stroke="#1c3ce0" stroke-width="3"/><path d="M19 18l12 13" stroke="#111" stroke-width="4.500" stroke-linecap="round"/></svg>
<svg style="left:2839px;top:1761px" width="35" height="27" viewBox="0 0 34 26"><rect x="1" y="1" width="32" height="10" fill="#fff" stroke="#555" stroke-width="1.500"/><path d="M4 4h5v4H4zM11 4h5v4h-5zM18 4h5v4h-5zM25 4h5v4h-5z" fill="#111"/><path d="M14 13h6v5h5l-8 7-8-7h5z" fill="#2a5ad8"/></svg>
<div style="left:83px;top:1668px;width:2714px;height:122.5px;border-radius:27px;background:linear-gradient(90deg,rgba(255,255,255,.18) 0%,rgba(255,255,255,0) 6%,rgba(255,255,255,0) 38%,rgba(255,255,255,.4) 46.500%,rgba(255,255,255,.34) 51%,rgba(255,255,255,0) 60%,rgba(255,255,255,0) 96%,rgba(255,255,255,.15) 100%),linear-gradient(#a09fac 0%,#aaaab6 35%,#bbbbc7 75%,#c2c2cd 100%);border:1px solid rgba(255,255,255,.35);box-shadow:0 0 2px rgba(0,0,0,.4);"></div>
<div style="left:101px;top:1687px;width:74px;height:74px;border-radius:17px;background:#1c68ee;overflow:hidden;box-shadow:0 1px 3px rgba(0,0,0,.3);"><svg style="left:0;top:0" width="74" height="74" viewBox="0 0 74 74"><rect width="74" height="74" fill="url(#fb)"/><defs><linearGradient id="fb" x1="0" y1="0" x2="0" y2="1"><stop offset="0" stop-color="#41a6fa"/><stop offset="1" stop-color="#1c68ee"/></linearGradient></defs><path d="M42 0h32v74H46c-2-8-3-16-3-24h-9c0-18 3-36 8-50z" fill="#e9eef6"/><path d="M42 0c-5 14-8 32-8 50h9c0 8 1 16 3 24" fill="none" stroke="#1d2a44" stroke-width="2"/><path d="M20 20v8M54 20v8" stroke="#1d2a44" stroke-width="3" stroke-linecap="round"/><path d="M14 50c12 12 34 12 46 0" fill="none" stroke="#1d2a44" stroke-width="2.600" stroke-linecap="round"/></svg></div>
<div style="left:201px;top:1687px;width:74px;height:74px;border-radius:17px;background:linear-gradient(#ececf0,#dcdce2);overflow:hidden;box-shadow:0 1px 3px rgba(0,0,0,.3);"><svg style="left:0;top:0" width="74" height="74" viewBox="0 0 74 74"><rect x="11.0" y="12.0" width="15" height="15" rx="3.500" fill="#4cd84c"/><rect x="29.5" y="12.0" width="15" height="15" rx="3.500" fill="#f8b820"/><rect x="48.0" y="12.0" width="15" height="15" rx="3.500" fill="#f08820"/><rect x="11.0" y="30.5" width="15" height="15" rx="3.500" fill="#e03828"/><rect x="29.5" y="30.5" width="15" height="15" rx="3.500" fill="#a8acb4"/><rect x="48.0" y="30.5" width="15" height="15" rx="3.500" fill="#f04868"/><rect x="11.0" y="49.0" width="15" height="15" rx="3.500" fill="#9c44e0"/><rect x="29.5" y="49.0" width="15" height="15" rx="3.500" fill="#2c8cf4"/><rect x="48.0" y="49.0" width="15" height="15" rx="3.500" fill="#40d0b0"/></svg></div>
<div style="left:303px;top:1687px;width:74px;height:74px;border-radius:17px;background:linear-gradient(#7af07a,#3cc840);overflow:hidden;box-shadow:0 1px 3px rgba(0,0,0,.3);"><svg style="left:0;top:0" width="74" height="74" viewBox="0 0 74 74"><ellipse cx="37" cy="34" rx="26" ry="21.500" fill="url(#mg)"/><defs><linearGradient id="mg" x1="0" y1="0" x2="0" y2="1"><stop offset="0" stop-color="#fff"/><stop offset="1" stop-color="#d8f4d8"/></linearGradient></defs><path d="M20 48c0 6-3 9-7 11 7 1 13-1 17-6z" fill="#e4f6e4"/></svg></div>
<div style="left:403px;top:1687px;width:74px;height:74px;border-radius:17px;background:linear-gradient(#2f6ef0,#58c4fc);overflow:hidden;box-shadow:0 1px 3px rgba(0,0,0,.3);"><svg style="left:0;top:0" width="74" height="74" viewBox="0 0 74 74"><rect x="10.500" y="20" width="53" height="34" rx="4" fill="#f4f6fa"/><path d="M11.500 22l25.500 20 25.500-20" fill="none" stroke="#b8c0cc" stroke-width="2.400"/><path d="M11.500 52l19-16M62.500 52l-19-16" stroke="#cfd5de" stroke-width="2"/></svg></div>
<div style="left:503px;top:1687px;width:74px;height:74px;border-radius:17px;background:#6ed46a;overflow:hidden;box-shadow:0 1px 3px rgba(0,0,0,.3);"><svg style="left:0;top:0" width="74" height="74" viewBox="0 0 74 74"><rect width="74" height="74" fill="#6ed46a"/><path d="M0 30l16 6v38H0z" fill="#f088c8"/><path d="M16 36v38h24V52z" fill="#eef0f2"/><path d="M40 52l34-26v22L50 74H40z" fill="#eef0f2"/><path d="M50 74l24-20v20z" fill="#f8d040"/><path d="M22 0h14v44H22z" fill="#3a86f4"/><path d="M16 0h6v40l-6-4zM36 0h6v48l-6 4z" fill="#eef0f2"/><circle cx="62" cy="12" r="16" fill="none" stroke="#c8ccd0" stroke-width="7"/><circle cx="62" cy="12" r="16" fill="none" stroke="#e8eaec" stroke-width="3"/><circle cx="28" cy="47" r="18" fill="#eaf2fc"/><circle cx="28" cy="47" r="14.500" fill="#2f80f0"/><path d="M28 35l9 20-9-5-9 5z" fill="#fff"/></svg></div>
<div style="left:603px;top:1687px;width:74px;height:74px;border-radius:17px;background:linear-gradient(#fff,#f2f2f2);overflow:hidden;box-shadow:0 1px 3px rgba(0,0,0,.3);"><svg style="left:0;top:0" width="74" height="74" viewBox="0 0 74 74"><ellipse cx="37" cy="20.500" rx="9" ry="15" fill="#f8a020" opacity=".82" transform="rotate(0 37 37)"/><ellipse cx="37" cy="20.500" rx="9" ry="15" fill="#f8d820" opacity=".82" transform="rotate(45 37 37)"/><ellipse cx="37" cy="20.500" rx="9" ry="15" fill="#a8d830" opacity=".82" transform="rotate(90 37 37)"/><ellipse cx="37" cy="20.500" rx="9" ry="15" fill="#40c880" opacity=".82" transform="rotate(135 37 37)"/><ellipse cx="37" cy="20.500" rx="9" ry="15" fill="#40a8e8" opacity=".82" transform="rotate(180 37 37)"/><ellipse cx="37" cy="20.500" rx="9" ry="15" fill="#6878e0" opacity=".82" transform="rotate(225 37 37)"/><ellipse cx="37" cy="20.500" rx="9" ry="15" fill="#b060d0" opacity=".82" transform="rotate(270 37 37)"/><ellipse cx="37" cy="20.500" rx="9" ry="15" fill="#f05858" opacity=".82" transform="rotate(315 37 37)"/></svg></div>
<div style="left:705px;top:1687px;width:74px;height:74px;border-radius:17px;background:linear-gradient(#7af07a,#3cc840);overflow:hidden;box-shadow:0 1px 3px rgba(0,0,0,.3);"><svg style="left:0;top:0" width="74" height="74" viewBox="0 0 74 74"><rect x="9" y="22" width="39" height="30" rx="8" fill="#eefaee"/><path d="M51 33l14-9.500v27L51 41z" fill="#eefaee"/></svg></div>
<div style="left:805px;top:1687px;width:74px;height:74px;border-radius:17px;background:#fbfbfb;overflow:hidden;box-shadow:0 1px 3px rgba(0,0,0,.3);"><div style="left:0;top:0;width:74px;height:23px;background:#ee5a50"></div><span class="t" style="left:17px;top:4px;font:700 15.500px 'Liberation Sans',sans-serif;color:#fff;letter-spacing:.3px">JUIL.</span><span class="t" style="left:15.500px;top:20px;font:200 46px 'DejaVu Sans',sans-serif;color:#1e1e1e;-webkit-text-stroke:.5px #1e1e1e;transform:scaleX(.74);transform-origin:0 0">21</span></div>
<div style="left:905px;top:1687px;width:74px;height:74px;border-radius:17px;background:#b08850;overflow:hidden;box-shadow:0 1px 3px rgba(0,0,0,.3);"><svg style="left:0;top:0" width="74" height="74" viewBox="0 0 74 74"><rect x="66" y="10" width="8" height="14" fill="#e8e0d0"/><rect x="66" y="24" width="8" height="14" fill="#58b8f0"/><rect x="66" y="38" width="8" height="14" fill="#f09030"/><rect x="66" y="52" width="8" height="14" fill="#60c860"/><rect x="0" y="0" width="68" height="74" rx="6" fill="url(#cb)"/><defs><linearGradient id="cb" x1="0" y1="0" x2="0" y2="1"><stop offset="0" stop-color="#bc9258"/><stop offset="1" stop-color="#a87c44"/></linearGradient></defs><circle cx="36" cy="37" r="21" fill="none" stroke="#8c6430" stroke-width="2.400"/><circle cx="36" cy="30" r="7.500" fill="#96703a"/><path d="M21 50c3-9 27-9 30 0a21 21 0 0 1-30 0z" fill="#96703a"/></svg></div>
<div style="left:1005px;top:1687px;width:74px;height:74px;border-radius:17px;background:linear-gradient(#fff,#f4f4f4);overflow:hidden;box-shadow:0 1px 3px rgba(0,0,0,.3);"><svg style="left:0;top:0" width="74" height="74" viewBox="0 0 74 74"><circle cx="15" cy="18" r="5.500" fill="none" stroke="#2f7ef4" stroke-width="1.600"/><circle cx="15" cy="18" r="3.400" fill="#2f7ef4"/><path d="M28 18h38" stroke="#c8c8cc" stroke-width="1.600"/><circle cx="15" cy="37" r="5.500" fill="none" stroke="#f04838" stroke-width="1.600"/><circle cx="15" cy="37" r="3.400" fill="#f04838"/><path d="M28 37h38" stroke="#c8c8cc" stroke-width="1.600"/><circle cx="15" cy="56" r="5.500" fill="none" stroke="#f8a020" stroke-width="1.600"/><circle cx="15" cy="56" r="3.400" fill="#f8a020"/><path d="M28 56h38" stroke="#c8c8cc" stroke-width="1.600"/></svg></div>
<div style="left:1107px;top:1687px;width:74px;height:74px;border-radius:17px;background:linear-gradient(#fbfaf6,#f0eee8);overflow:hidden;box-shadow:0 1px 3px rgba(0,0,0,.3);"><svg style="left:0;top:0" width="74" height="74" viewBox="0 0 74 74"><rect width="74" height="19" fill="url(#ng)"/><defs><linearGradient id="ng" x1="0" y1="0" x2="0" y2="1"><stop offset="0" stop-color="#fcdc50"/><stop offset="1" stop-color="#f8c830"/></linearGradient></defs><path d="M0 21h74" stroke="#c8c4b8" stroke-width="1" stroke-dasharray="1.500 1.500"/><path d="M0 37h74M0 55h74" stroke="#dedad0" stroke-width="1.600"/></svg></div>
<div style="left:1207px;top:1687px;width:74px;height:74px;border-radius:17px;background:linear-gradient(#2a3432,#0c1010);overflow:hidden;box-shadow:0 1px 3px rgba(0,0,0,.3);"><svg style="left:0;top:0" width="74" height="74" viewBox="0 0 74 74"><g transform="translate(9.500 21.500) scale(.8)"><path d="M19.500 0c.2 2-.6 3.900-1.800 5.300-1.200 1.400-3.100 2.500-5 2.300-.3-1.900.7-3.900 1.800-5.100C15.700 1.100 17.800.1 19.500 0zM25.600 11.300c-2.100 1.300-3.400 3.300-3.400 5.800 0 2.900 1.800 5.300 4.300 6.300-.5 1.600-1.300 3.200-2.300 4.700-1.400 2.100-2.900 4.200-5.200 4.200-2.300 0-2.900-1.400-5.500-1.400-2.600 0-3.400 1.400-5.500 1.500-2.200.1-3.900-2.300-5.300-4.400C-.2 23.700-1.300 16.900 1.700 12.900c1.500-2.100 3.900-3.400 6.300-3.400 2.400 0 3.900 1.500 5.900 1.500 1.900 0 3.100-1.500 5.900-1.500 2.100 0 4.400 1.100 5.800 1.800z" fill="#fff"/></g></svg><span class="t" style="left:34px;top:19.500px;font:400 34px 'Liberation Sans',sans-serif;color:#fff;letter-spacing:0;-webkit-text-stroke:.7px #fff">tv</span></div>
<div style="left:1307px;top:1687px;width:74px;height:74px;border-radius:17px;background:linear-gradient(#f86878,#e83840);overflow:hidden;box-shadow:0 1px 3px rgba(0,0,0,.3);"><svg style="left:0;top:0" width="74" height="74" viewBox="0 0 74 74"><path d="M28 19l25-6v33.500a7.500 6.500 0 1 1-4-5.800V23l-17 4v24a7.500 6.500 0 1 1-4-5.800z" fill="#fff"/></svg></div>
<div style="left:1407px;top:1687px;width:74px;height:74px;border-radius:17px;background:linear-gradient(#c070f0,#8030c0);overflow:hidden;box-shadow:0 1px 3px rgba(0,0,0,.3);"><svg style="left:0;top:0" width="74" height="74" viewBox="0 0 74 74"><g fill="none" stroke="#fff" stroke-width="4"><path d="M20 50a24 24 0 1 1 34 0"/><path d="M27 42a13.500 13.500 0 1 1 20 0"/></g><circle cx="37" cy="32" r="6" fill="#fff"/><path d="M32 44q5-3.500 10 0l-2 19q-3 3-6 0z" fill="#fff"/></svg></div>
<div style="left:1509px;top:1687px;width:74px;height:74px;border-radius:17px;background:linear-gradient(#58c0fc,#2f78f0);overflow:hidden;box-shadow:0 1px 3px rgba(0,0,0,.3);"><svg style="left:0;top:0" width="74" height="74" viewBox="0 0 74 74"><path d="M19 11h36l5 19H14z" fill="#f4f6f8"/><rect x="13" y="30" width="48" height="4" rx="1.500" fill="#dfe4e8"/><path d="M37 34v26" stroke="#e8ecf0" stroke-width="3"/><path d="M26 61.500h22" stroke="#e8ecf0" stroke-width="3.500" stroke-linecap="round"/><circle cx="37" cy="19.500" r="6.500" fill="#f8b030"/><path d="M37 19.500V13a6.500 6.500 0 0 1 6 9z" fill="#e84040"/><path d="M37 19.500l6 2.500a6.500 6.500 0 0 1-9 3.500z" fill="#58c058"/></svg></div>
<div style="left:1609px;top:1687px;width:74px;height:74px;border-radius:17px;background:linear-gradient(#7aec6a,#38c038);overflow:hidden;box-shadow:0 1px 3px rgba(0,0,0,.3);"><svg style="left:0;top:0" width="74" height="74" viewBox="0 0 74 74"><g fill="#f4faf4"><rect x="13" y="48" width="9" height="15" rx="2.500"/><rect x="26" y="34" width="9" height="29" rx="2.500"/><rect x="39" y="11" width="9" height="52" rx="2.500"/><rect x="52" y="24" width="9" height="39" rx="2.500"/></g></svg></div>
<div style="left:1709px;top:1687px;width:74px;height:74px;border-radius:17px;background:linear-gradient(#f8b040,#f09030);overflow:hidden;box-shadow:0 1px 3px rgba(0,0,0,.3);"><svg style="left:0;top:0" width="74" height="74" viewBox="0 0 74 74"><path d="M12 62h52" stroke="#fbd4a0" stroke-width="2"/><path d="M12 61L52 17q5-5 8-2t-1 8L17 60z" fill="#fdf6ec"/><path d="M12 61l6-3-2-3z" fill="#555"/><path d="M49 20l6 6" stroke="#e8c898" stroke-width="1.500"/></svg></div>
<div style="left:1809px;top:1687px;width:74px;height:74px;border-radius:17px;background:linear-gradient(#4cb8fc,#2464e6);overflow:hidden;box-shadow:0 1px 3px rgba(0,0,0,.3);"><svg style="left:0;top:0" width="74" height="74" viewBox="0 0 74 74"><g fill="none" stroke="#fff" stroke-width="6.400" stroke-linecap="round"><path d="M14 57.400l3.500-5.500M24 41.500L41.800 15.100M31.500 15.100L57.200 57.400M12.300 45.400H38M52 45.400h10.300"/></g></svg></div>
<div style="left:1911px;top:1687px;width:74px;height:74px;border-radius:17px;background:linear-gradient(#dcdee2,#9a9ea6);overflow:hidden;box-shadow:0 1px 3px rgba(0,0,0,.3);"><svg style="left:0;top:0" width="74" height="74" viewBox="0 0 74 74"><circle cx="37" cy="37" r="32" fill="url(#sg)"/><defs><linearGradient id="sg" x1="0" y1="0" x2="0" y2="1"><stop offset="0" stop-color="#6a6c70"/><stop offset="1" stop-color="#3a3c40"/></linearGradient></defs><circle cx="37" cy="37" r="30" fill="none" stroke="#1c1e22" stroke-width="4.500" stroke-dasharray="2 1.925"/><circle cx="37" cy="37" r="25.500" fill="#a4a8ac" stroke="#2c2e32" stroke-width="2"/><circle cx="37" cy="37" r="21" fill="none" stroke="#44484e" stroke-width="3" stroke-dasharray="1.600 1.700"/><circle cx="37" cy="37" r="17.500" fill="#8e9296" stroke="#34383c" stroke-width="2.400"/><g stroke="#44484e" stroke-width="4"><path d="M37 37V20M37 37l14.700 8.500M37 37l-14.700 8.500"/></g><circle cx="37" cy="37" r="4.500" fill="#44484e"/></svg></div>
<div style="left:2011px;top:1687px;width:74px;height:74px;border-radius:17px;background:linear-gradient(#fdfdfd,#e4e4e6);overflow:hidden;box-shadow:0 1px 3px rgba(0,0,0,.3);border:1px solid #d0d0d4;"><svg style="left:0;top:0" width="74" height="74" viewBox="0 0 74 74"><g fill="none" stroke="#3a3a3e" stroke-width="4.500" stroke-linecap="round"><path d="M11 24v-6a7 7 0 0 1 7-7h6M50 11h6a7 7 0 0 1 7 7v6M63 50v6a7 7 0 0 1-7 7h-6M24 63h-6a7 7 0 0 1-7-7v-6"/></g><rect x="22" y="27" width="30" height="22" rx="4" fill="#3a3a3e"/><path d="M30 27l2.500-4h9l2.500 4z" fill="#3a3a3e"/><circle cx="37" cy="38" r="6.500" fill="#f4f4f4"/><circle cx="37" cy="38" r="4" fill="#3a3a3e"/><circle cx="37" cy="38" r="4" fill="none" stroke="#f4f4f4" stroke-width="2.400"/></svg></div>
<div style="left:2111px;top:1687px;width:74px;height:74px;border-radius:17px;background:linear-gradient(#fff,#eceef0);overflow:hidden;box-shadow:0 1px 3px rgba(0,0,0,.3);"><svg style="left:0;top:0" width="74" height="74" viewBox="0 0 74 74"><circle cx="37" cy="37" r="32" fill="url(#sf)"/><defs><linearGradient id="sf" x1="0" y1="0" x2="0" y2="1"><stop offset="0" stop-color="#2cb4f8"/><stop offset="1" stop-color="#2060e8"/></linearGradient></defs><circle cx="37" cy="37" r="28.500" fill="none" stroke="#fff" stroke-width="4" stroke-dasharray="1 2.730" opacity=".9"/><path d="M59 15L33 33l8 8z" fill="#f04838"/><path d="M15 59l18-26 8 8z" fill="#f6f6f6"/></svg></div>
<div style="left:2222px;top:1684px;width:1.5px;height:89px;background:rgba(80,80,90,.55);"></div>
<div style="left:2568.5px;top:1684px;width:1.5px;height:89px;background:rgba(80,80,90,.55);"></div>
<div style="left:2248px;top:1678.5px;width:92px;height:91.5px;background:linear-gradient(#fdf0a0,#fbe24c);border-radius:4px;"></div>
<svg style="left:2248px;top:1678px" width="92" height="92" viewBox="0 0 92 92"><path d="M32 35v41" stroke="#b83030" stroke-width="2"/><rect x="22.500" y="42" width="19" height="25" fill="#f08484" stroke="#b83030" stroke-width="2"/><path d="M60 16v60" stroke="#2c9a2c" stroke-width="2"/><rect x="51" y="27" width="18.500" height="36" fill="#7ce47c" stroke="#2c9a2c" stroke-width="2"/></svg>
<div style="left:2357px;top:1687px;width:74px;height:74px;border-radius:17px;background:linear-gradient(#fcfcfc,#e9e9ed);overflow:hidden;box-shadow:0 1px 3px rgba(0,0,0,.3);overflow:visible;"><svg style="left:0;top:0" width="74" height="74" viewBox="0 0 74 74"><defs><linearGradient id="pv" x1="0" y1="0" x2="0" y2="1"><stop offset="0" stop-color="#8eaef0"/><stop offset=".52" stop-color="#b6ccf4"/><stop offset=".53" stop-color="#2a56a0"/><stop offset=".68" stop-color="#4a78b8"/><stop offset=".8" stop-color="#dfeaf6"/><stop offset="1" stop-color="#9ab4d0"/></linearGradient></defs><rect x="6" y="6" width="62" height="60" rx="9" fill="url(#pv)"/><path d="M6 44l7-3 6 3 5-2 5 4-6 4-9-1-8 3z" fill="#4a4038"/><path d="M6 58c8-4 14 2 22-1s10 3 14 2v7H14a8 8 0 0 1-8-8z" fill="#6a5a48"/><path d="M10 50c6-2 12 2 20 0" stroke="#fff" stroke-width="2" fill="none" opacity=".8"/></svg></div>
<svg style="left:2388px;top:1722px" width="46" height="44" viewBox="0 0 46 44"><path d="M10 15h26l8 22q-21 9-42 0z" fill="#e4e8ec" stroke="#6a6e74" stroke-width="1.400" opacity=".93"/><path d="M12 24l7-3 5 4 7-3 4 9q-13 5-27 1z" fill="#8094ac"/><ellipse cx="23" cy="38.500" rx="19" ry="4" fill="#f4f6f8" opacity=".8"/><ellipse cx="23" cy="7" rx="15.500" ry="5.500" fill="#2c2c2c"/><rect x="7.500" y="7" width="31" height="9" fill="#141414"/><ellipse cx="23" cy="16" rx="15.500" ry="4.500" fill="#1c1c1c"/></svg>
<svg style="left:2452px;top:1676px" width="84" height="96" viewBox="0 0 84 96"><defs><linearGradient id="pr" x1="0" x2="1"><stop offset="0" stop-color="#f28a8a"/><stop offset="1" stop-color="#d86a6a"/></linearGradient><linearGradient id="pg" x1="0" x2="1"><stop offset="0" stop-color="#92ee84"/><stop offset="1" stop-color="#70d864"/></linearGradient></defs><path d="M20 31v66" stroke="#b43c3c" stroke-width="3"/><rect x="5.500" y="43.500" width="29" height="37" fill="url(#pr)" stroke="#b03a3a" stroke-width="3"/><path d="M63 2v93" stroke="#44a038" stroke-width="3"/><rect x="48.500" y="20.500" width="29" height="54" fill="url(#pg)" stroke="#409a34" stroke-width="3"/></svg>
<svg style="left:2598px;top:1690px" width="82" height="76" viewBox="0 0 82 76"><path d="M14 32l27 12 27-12v28L41 75 14 60z" fill="#b87a3c"/><path d="M41 44v31L14 60V32z" fill="#a86a30"/><path d="M14 32L1 24l26-11 14 9zM68 32l13-10-26-10-14 10z" fill="#d09858"/><path d="M14 32l-9 12 27 12 9-12zM68 32l9 12-27 12-9-12z" fill="#c48848"/><path d="M16 8l25-8 25 8v24L41 42 16 32z" fill="#f4e040" opacity=".75"/><path d="M16 8l25 9 25-9M41 17v25" fill="none" stroke="#f8ec80" stroke-width="1.500" opacity=".8"/></svg>
<svg style="left:2708px;top:1680px" width="68" height="86" viewBox="0 0 68 86"><path d="M3 20h62l-7 58q-1 6-8 6H18q-7 0-8-6z" fill="url(#tr)" stroke="#c8ccd4" stroke-width="1.200"/><defs><linearGradient id="tr" x1="0" x2="1"><stop offset="0" stop-color="#d8dce2"/><stop offset=".5" stop-color="#f4f6f8"/><stop offset="1" stop-color="#d0d4dc"/></linearGradient></defs><ellipse cx="34" cy="20" rx="31" ry="6.500" fill="#eceef2" stroke="#b8bcc4" stroke-width="1.500"/><path d="M8 17l8-11 9 6 7-10 9 9 8-7 6 8 6 6q-26 8-53-1z" fill="#e4e6ea" stroke="#aaa" stroke-width="1"/><path d="M22 9l5 4M40 6l4 5M30 12l6-3" stroke="#5878b8" stroke-width="2.500"/><path d="M14 12l4 3M48 9l3 4" stroke="#c06040" stroke-width="2"/></svg>
<div style="left:134px;top:1777.5px;width:8px;height:8px;border-radius:50%;background:#3a3a40;"></div>
<div style="left:2144px;top:1777.5px;width:8px;height:8px;border-radius:50%;background:#3a3a40;"></div>
<div style="left:2489.5px;top:1777.5px;width:8px;height:8px;border-radius:50%;background:#3a3a40;"></div>
</body></html>
